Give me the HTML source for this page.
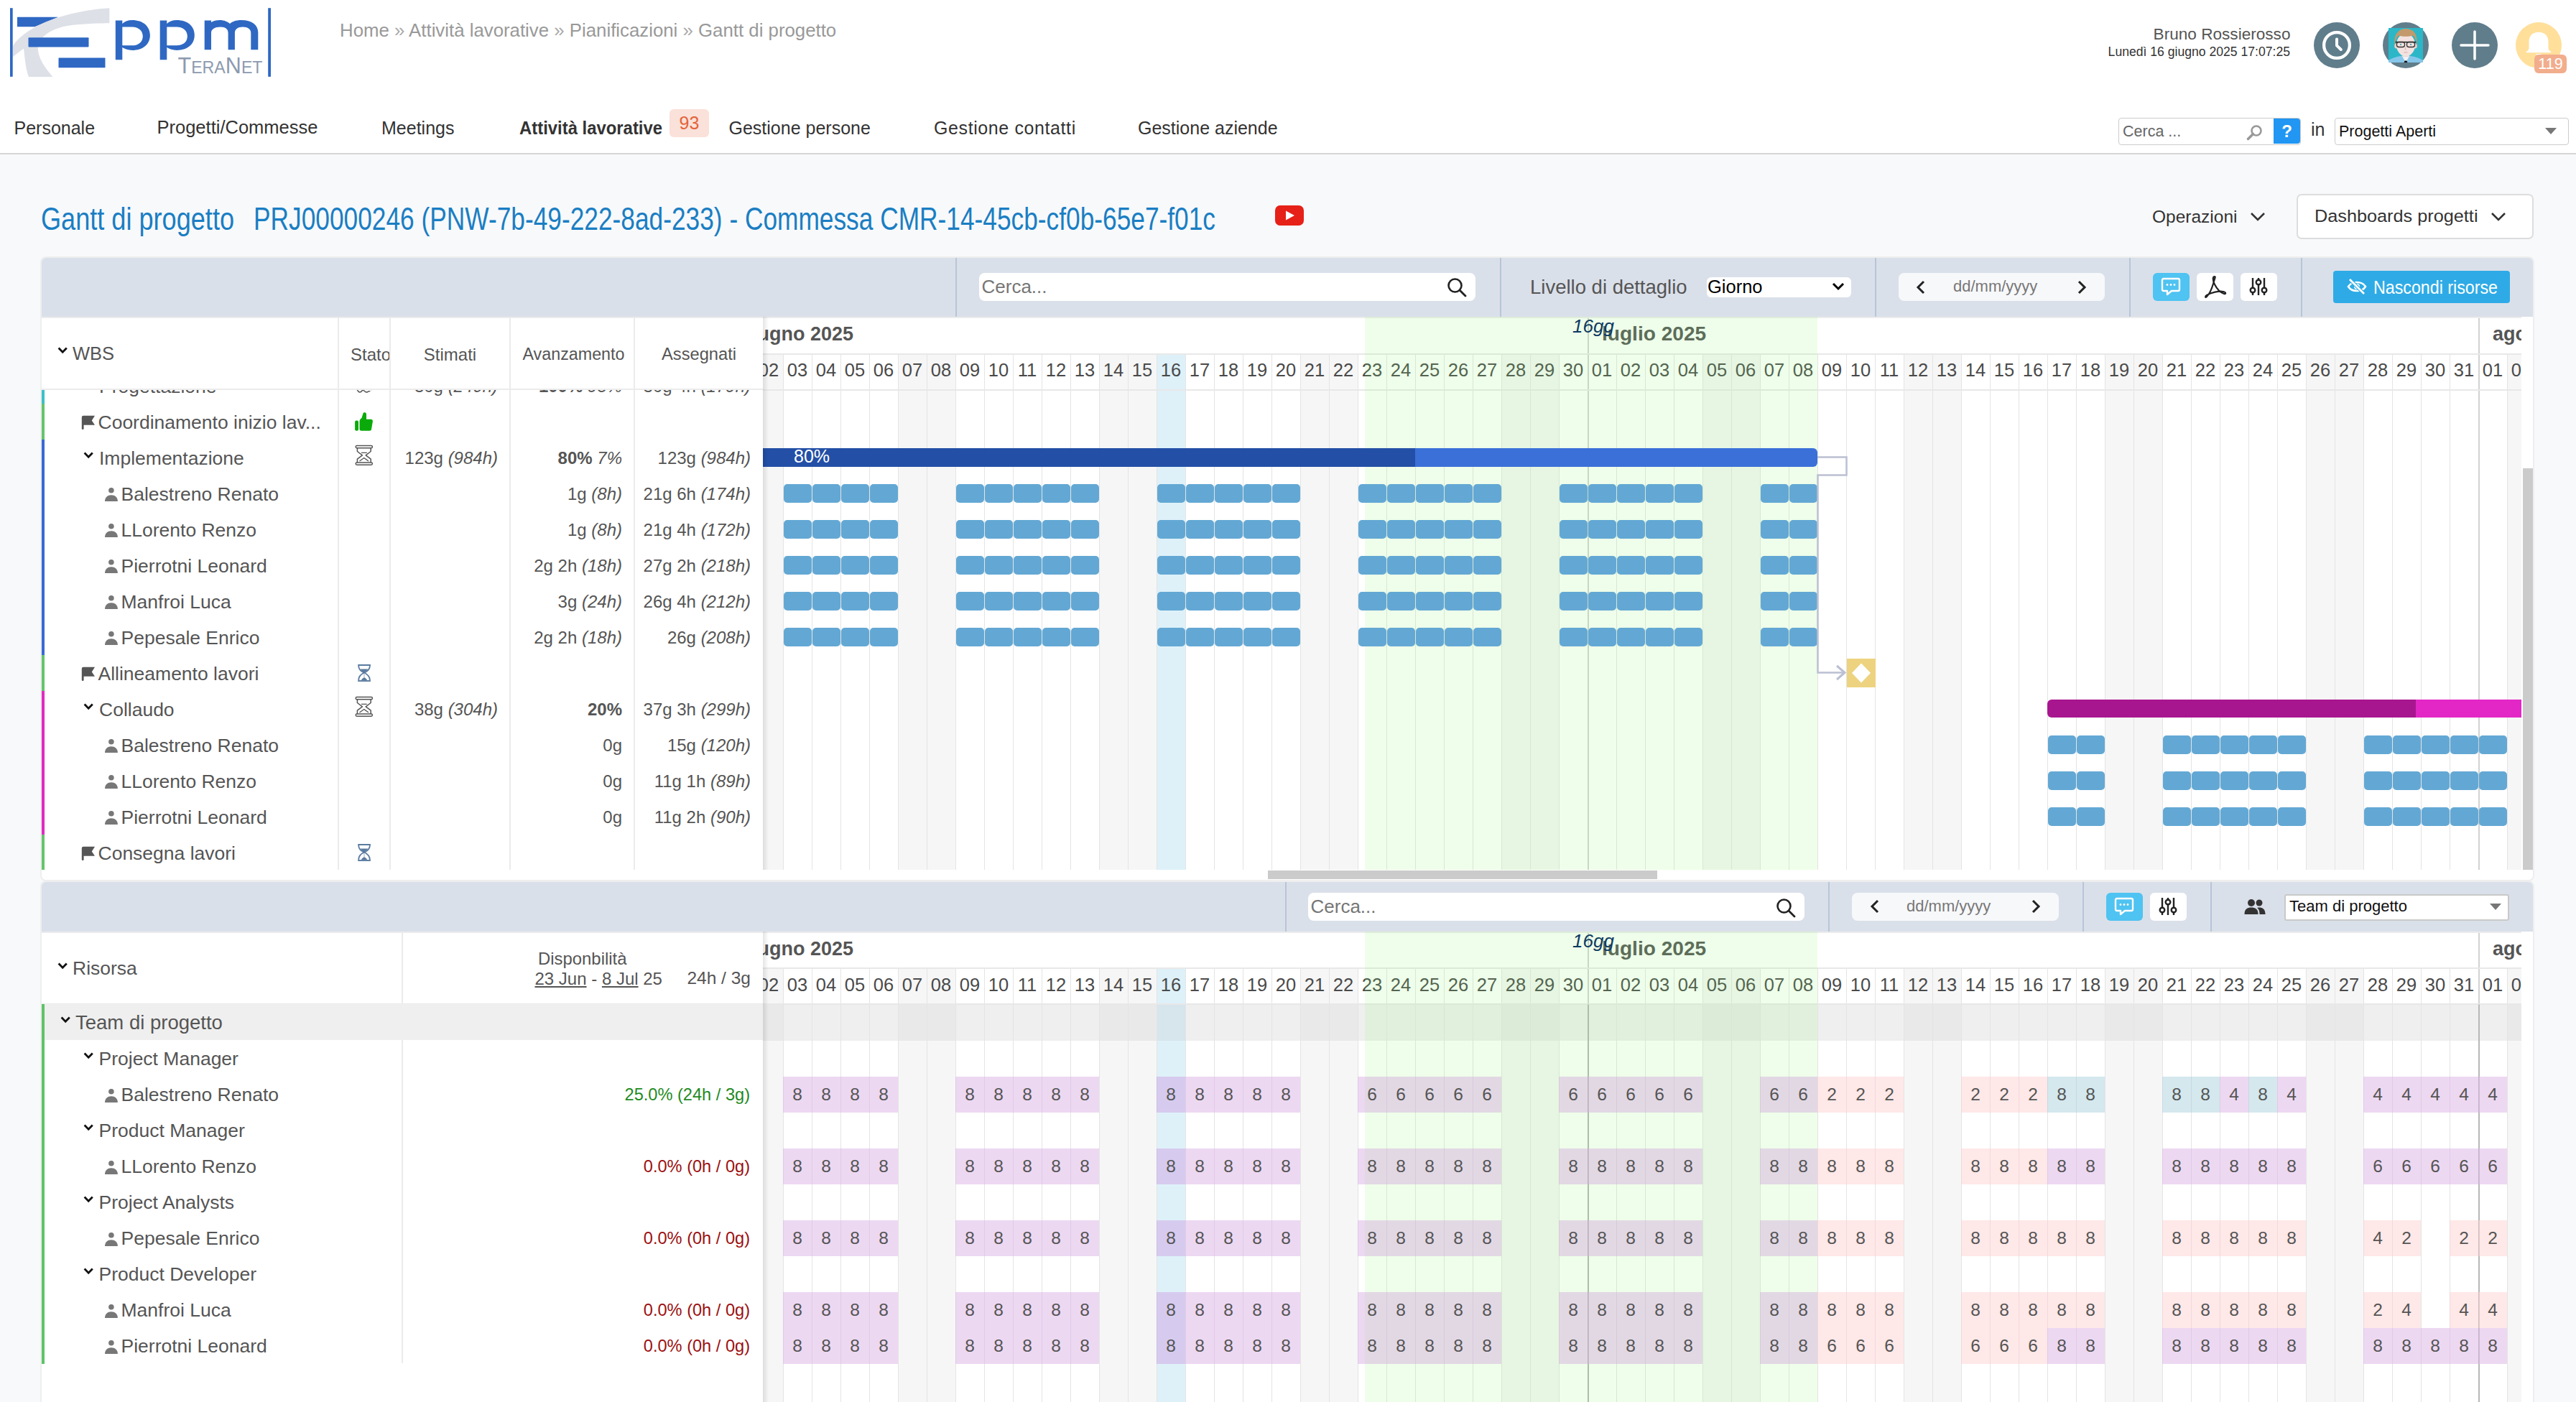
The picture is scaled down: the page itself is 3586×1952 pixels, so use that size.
<!DOCTYPE html><html><head><meta charset="utf-8"><style>
*{box-sizing:border-box;margin:0;padding:0}
html,body{width:3586px;height:1952px;overflow:hidden;background:#F8F9FB;font-family:"Liberation Sans",sans-serif;color:#555}
.a{position:absolute}
.t{position:absolute;white-space:nowrap;line-height:1}
svg{display:block}
</style></head><body><div class="a" style="left:0px;top:0px;width:3586px;height:213px;background:#fff"></div>
<div class="a" style="left:0px;top:213px;width:3586px;height:2px;background:#D6D6D6"></div>
<svg class="a" style="left:0px;top:0px" width="400" height="120" viewBox="0 0 400 120">
<path d="M24,23.7 L81,23.7 L48.4,37.2 L24,37.2 Z" fill="#2F68C3"/>
<path d="M152.4,11.2 C120,13 75,22 45,40 C30,49 22,57 18,64 L18,79 L33,67.5 C35,85 36,97 40,107 L73.4,107 C63,95 52.5,80 52.8,67 C53,50 75,38 100,35 C120,33 140,32.3 152.4,32.3 Z" fill="#DDE0E7"/>
<rect x="14" y="11.2" width="3.7" height="95.6" fill="#2F68C3"/>
<rect x="373.2" y="11.2" width="3.8" height="95.6" fill="#2F68C3"/>
<rect x="39.5" y="52.2" width="84" height="13.3" rx="1" fill="#2F68C3"/>
<rect x="81.5" y="80.5" width="65" height="13.7" rx="0.5" fill="#2F68C3"/>
<path fill-rule="evenodd" fill="#2F68C3" d="M160.8,83.2 L160.8,28.6 L170.3,28.6 L170.3,33 C174,29.5 178,27.9 184,27.9 C199,27.9 208.9,36.5 208.9,48.9 C208.9,61.5 199,69.9 184,69.9 C178,69.9 174,68 170.3,66 L170.3,83.2 Z M170.3,37.5 L184,37.5 C193,37.5 198.8,43 198.8,50.4 C198.8,58 193,63.3 184,63.3 L170.3,63.3 Z"/>
<path fill-rule="evenodd" fill="#2F68C3" d="M222.7,83.2 L222.7,28.6 L232.3,28.6 L232.3,33 C236,29.5 240,27.9 246,27.9 C261,27.9 270.8,36.5 270.8,48.9 C270.8,61.5 261,69.9 246,69.9 C240,69.9 236,68 232.3,66 L232.3,83.2 Z M232.3,37.5 L246,37.5 C255,37.5 260.8,43 260.8,50.4 C260.8,58 255,63.3 246,63.3 L232.3,63.3 Z"/>
<path fill="#2F68C3" d="M284.7,69.2 L284.7,28.6 L294,28.6 L294,31 C297,29 301,27.9 306,27.9 C312,27.9 317,30 320,33 C323,30 328,27.9 336,27.9 C351,27.9 359.3,35 359.3,45 L359.3,69.2 L349.3,69.2 L349.3,46 C349.3,40.5 345,37.5 338,37.5 C331,37.5 326.9,40.5 326.9,46 L326.9,69.2 L317.6,69.2 L317.6,46 C317.6,40.5 314,37.5 307,37.5 C299,37.5 294,40.5 294,46 L294,69.2 Z"/>
<text x="247.5" y="101.6" font-family="Liberation Sans" font-size="31" fill="#8D9AAF" textLength="118" lengthAdjust="spacingAndGlyphs">T<tspan font-size="23.5">ERA</tspan>N<tspan font-size="23.5">ET</tspan></text>
</svg>
<div class="t" style="left:473px;top:29.56px;font-size:25.8px;color:#999;font-weight:400;">Home <span style="color:#aaa">»</span> Attività lavorative <span style="color:#aaa">»</span> Pianificazioni <span style="color:#aaa">»</span> Gantt di progetto</div>
<div class="t" style="right:397.5px;top:36.87px;font-size:22.6px;color:#555;font-weight:400;">Bruno Rossierosso</div>
<div class="t" style="right:398px;top:64.1px;font-size:17.6px;color:#333;font-weight:400;">Lunedì 16 giugno 2025 17:07:25</div>
<div class="a" style="left:3221px;top:31px;width:64px;height:64px;border-radius:50%;background:#607D8B"><svg width="64" height="64" viewBox="0 0 64 64"><circle cx="32" cy="32" r="17.9" fill="none" stroke="#fff" stroke-width="4.3"/><path d="M32,23.4 V32.4 L37.8,38" fill="none" stroke="#fff" stroke-width="4" stroke-linecap="round" stroke-linejoin="round"/></svg></div>
<div class="a" style="left:3317px;top:31px;width:64px;height:64px;border-radius:50%;background:#607D8B"><svg width="64" height="64" viewBox="0 0 64 64">
<rect x="8" y="8" width="48" height="48" fill="#2BB7C7"/>
<path d="M8,56 L8,53 C13,49.5 20,47.5 25,47 L39,47 C44,47.5 51,49.5 56,53 L56,56 Z" fill="#86C6EA"/>
<path d="M26.5,46.5 L32,56 L37.5,46.5 Z" fill="#F2F2F2"/>
<path d="M30.6,53.5 L33.4,53.5 L34.4,56 L29.6,56 Z" fill="#111"/>
<rect x="28" y="41" width="8" height="7" fill="#EBCFCB"/>
<ellipse cx="18.8" cy="33" rx="2.6" ry="3.6" fill="#EBCFCB"/>
<ellipse cx="45.2" cy="33" rx="2.6" ry="3.6" fill="#EBCFCB"/>
<ellipse cx="32" cy="31.5" rx="13" ry="16" fill="#F3E2E0"/>
<path d="M16.8,33 C14.5,18 21,9 32,9 C44,9 49.5,18 47.2,33 C46.5,26 45.5,21 42,18.5 C36,20.5 27,20 21.5,18.5 C18.5,22 17.3,27 16.8,33 Z" fill="#C39A6B"/>
<path d="M17.5,27.6 H46.5" stroke="#222" stroke-width="1.5"/>
<rect x="19.5" y="27.5" width="11" height="7" rx="2.8" fill="none" stroke="#333" stroke-width="1.3"/>
<rect x="33.5" y="27.5" width="11" height="7" rx="2.8" fill="none" stroke="#333" stroke-width="1.3"/>
<circle cx="25" cy="31" r="1.1" fill="#2A9BA8"/><circle cx="39" cy="31" r="1.1" fill="#2A9BA8"/>
<path d="M32,34 L31,38 L33,38" fill="none" stroke="#C9A9A5" stroke-width="0.7"/>
<path d="M29.5,42 H34.5" stroke="#D9A3A0" stroke-width="0.9"/>
</svg></div>
<div class="a" style="left:3413px;top:31px;width:64px;height:64px;border-radius:50%;background:#607D8B"><svg width="64" height="64" viewBox="0 0 64 64"><path d="M32 13 L32 51 M13 32 L51 32" stroke="#fff" stroke-width="3.5" stroke-linecap="round"/></svg></div>
<div class="a" style="left:3502px;top:31px;width:64px;height:64px;border-radius:50%;background:#FFDF9A"><svg width="64" height="64" viewBox="0 0 64 64"><path d="M18.5,38 L18.5,27 C18.5,19 23.5,13.8 32,13.8 C40.5,13.8 45.5,19 45.5,27 L45.5,36.5 C45.5,38.5 47.5,39.8 49,40.6 C50,41.5 49.5,42.3 48,42.3 L16,42.3 C14.5,42.3 14,41.5 15,40.6 C16.5,39.8 18.5,38.5 18.5,36.5 Z" fill="#fff"/><path d="M28,44 L36,44 L32,48 Z" fill="#fff"/></svg></div>
<div class="a" style="left:3528px;top:76px;width:45px;height:26px;background:#F2AD8D;border-radius:6px"><div class="t" style="left:3px;top:2.5px;font-size:21.5px;color:#fff;font-weight:400;width:39px;text-align:center">119</div></div>
<div class="t" style="left:19.5px;top:165.84px;font-size:25px;color:#333;font-weight:400;">Personale</div>
<div class="t" style="left:218.5px;top:165.41px;font-size:25.5px;color:#333;font-weight:400;">Progetti/Commesse</div>
<div class="t" style="left:531px;top:165.84px;font-size:25px;color:#333;font-weight:400;">Meetings</div>
<div class="t" style="left:723px;top:165.84px;font-size:25px;color:#333;font-weight:700;transform:scaleX(0.955);transform-origin:0 0">Attività lavorative</div>
<div class="a" style="left:932px;top:152px;width:55px;height:39px;background:#FAE1D9;border-radius:6px"><div class="t" style="left:0px;top:7px;font-size:25px;color:#E3643A;font-weight:400;width:55px;text-align:center">93</div></div>
<div class="t" style="left:1014.5px;top:165.84px;font-size:25px;color:#333;font-weight:400;">Gestione persone</div>
<div class="t" style="left:1300px;top:165.84px;font-size:25px;color:#333;font-weight:400;letter-spacing:0.6px">Gestione contatti</div>
<div class="t" style="left:1584px;top:165.84px;font-size:25px;color:#333;font-weight:400;">Gestione aziende</div>
<div class="a" style="left:2949px;top:164px;width:254px;height:38px;background:#fff;border:1.5px solid #ccc;border-radius:4px"></div>
<div class="t" style="left:2955px;top:172.8px;font-size:21.5px;color:#666;font-weight:400;">Cerca ...</div>
<svg class="a" style="left:3126px;top:172px" width="26" height="26" viewBox="0 0 26 26"><circle cx="15" cy="10" r="6.5" fill="none" stroke="#999" stroke-width="2.6"/><path d="M10.5 14.5 L3.5 21.5" stroke="#999" stroke-width="3.5" stroke-linecap="round"/></svg>
<div class="a" style="left:3165px;top:165px;width:37px;height:35px;background:#2196F3;border-radius:0 4px 4px 0"><div class="t" style="left:0px;top:6px;font-size:24px;color:#fff;font-weight:700;width:37px;text-align:center">?</div></div>
<div class="t" style="left:3217px;top:167.84px;font-size:25px;color:#333;font-weight:400;">in</div>
<div class="a" style="left:3250px;top:164px;width:326px;height:38px;background:#fff;border:1.5px solid #ccc;border-radius:4px"></div>
<div class="t" style="left:3256px;top:172.8px;font-size:21.5px;color:#111;font-weight:400;">Progetti Aperti</div>
<svg class="a" style="left:3543px;top:178px" width="16" height="10" viewBox="0 0 16 10"><path d="M0 0 L16 0 L8 9 Z" fill="#777"/></svg>
<div class="t" style="left:57px;top:282.41px;font-size:45px;color:#1A7EC3;font-weight:400;transform:scaleX(0.8025);transform-origin:0 0;">Gantt di progetto</div>
<div class="t" style="left:353px;top:282.41px;font-size:45px;color:#1A7EC3;font-weight:400;transform:scaleX(0.7842);transform-origin:0 0;">PRJ00000246 (PNW-7b-49-222-8ad-233) - Commessa CMR-14-45cb-cf0b-65e7-f01c</div>
<svg class="a" style="left:1774px;top:285px" width="42" height="30" viewBox="0 0 42 30"><rect x="1" y="1" width="40" height="28" rx="7" fill="#E62117"/><path d="M16 8.5 L28 15 L16 21.5 Z" fill="#fff"/></svg>
<div class="t" style="left:2995.5px;top:290.26px;font-size:24.5px;color:#333;font-weight:400;transform:scaleX(1.0001);transform-origin:0 0;">Operazioni</div>
<svg class="a" style="left:3132px;top:295px" width="22" height="14" viewBox="0 0 22 14"><path d="M2 2 L11 11 L20 2" fill="none" stroke="#333" stroke-width="2.6"/></svg>
<div class="a" style="left:3197px;top:270px;width:330px;height:63px;background:#fff;border:2px solid #DDDDDD;border-radius:7px"></div>
<div class="t" style="left:3222px;top:289.26px;font-size:24.5px;color:#333;font-weight:400;transform:scaleX(1.0311);transform-origin:0 0;">Dashboards progetti</div>
<svg class="a" style="left:3467px;top:295px" width="22" height="14" viewBox="0 0 22 14"><path d="M2 2 L11 11 L20 2" fill="none" stroke="#333" stroke-width="2.6"/></svg>
<div class="a" style="left:56px;top:357px;width:3472px;height:870px;background:#fff;border:2px solid #EEEEEE;border-radius:8px"></div>
<div class="a" style="left:58px;top:359px;width:3468px;height:82px;background:#DAE0EA;border-radius:6px 6px 0 0"></div>
<div class="a" style="left:56px;top:1226px;width:3472px;height:760px;background:#fff;border:2px solid #EEEEEE;border-radius:8px"></div>
<div class="a" style="left:58px;top:1228px;width:3468px;height:69px;background:#DAE0EA;border-radius:6px 6px 0 0"></div>
<div class="a" style="left:1330px;top:359px;width:2px;height:82px;background:#B7C5D8"></div>
<div class="a" style="left:2088px;top:359px;width:2px;height:82px;background:#B7C5D8"></div>
<div class="a" style="left:2610px;top:359px;width:2px;height:82px;background:#B7C5D8"></div>
<div class="a" style="left:2964px;top:359px;width:2px;height:82px;background:#B7C5D8"></div>
<div class="a" style="left:3203px;top:359px;width:2px;height:82px;background:#B7C5D8"></div>
<div class="a" style="left:1363px;top:380px;width:691px;height:39px;background:#fff;border-radius:8px"></div>
<div class="t" style="left:1366.5px;top:385.99px;font-size:26px;color:#767676;font-weight:400;">Cerca...</div>
<svg class="a" style="left:2013px;top:385px" width="30" height="30" viewBox="0 0 30 30"><circle cx="12.5" cy="12.5" r="9" fill="none" stroke="#222" stroke-width="2.6"/><path d="M19 19 L27 27" stroke="#222" stroke-width="2.8" stroke-linecap="round"/></svg>
<div class="t" style="left:2130px;top:385.72px;font-size:27.5px;color:#555;font-weight:400;">Livello di dettaglio</div>
<div class="a" style="left:2376px;top:386px;width:201px;height:28px;background:#fff;border-radius:6px"></div>
<div class="t" style="left:2377px;top:387.41px;font-size:25.5px;color:#000;font-weight:400;">Giorno</div>
<svg class="a" style="left:2550px;top:393px" width="18" height="13" viewBox="0 0 18 13"><path d="M2 2 L9 9 L16 2" fill="none" stroke="#000" stroke-width="3"/></svg>
<div class="a" style="left:2643px;top:380px;width:287px;height:39px;background:#F7F8FA;border-radius:8px"></div>
<svg class="a" style="left:2667px;top:390px" width="14" height="20" viewBox="0 0 14 20"><path d="M11 2 L3 10 L11 18" fill="none" stroke="#222" stroke-width="3"/></svg>
<div class="t" style="left:2719px;top:388.38px;font-size:22px;color:#777;font-weight:400;">dd/mm/yyyy</div>
<svg class="a" style="left:2891px;top:390px" width="14" height="20" viewBox="0 0 14 20"><path d="M3 2 L11 10 L3 18" fill="none" stroke="#222" stroke-width="3"/></svg>
<div class="a" style="left:2997px;top:380px;width:51px;height:39px;background:#4FC3F1;border-radius:6px"><svg class="a" style="left:10px;top:4px" width="30" height="30" viewBox="0 0 30 30"><path d="M5 4 L25 4 Q27 4 27 6 L27 19 Q27 21 25 21 L16 21 L10 26 L10 21 L5 21 Q3 21 3 19 L3 6 Q3 4 5 4 Z" fill="none" stroke="#fff" stroke-width="2.4" stroke-linejoin="round"/><circle cx="10" cy="12.5" r="1.4" fill="#fff"/><circle cx="15" cy="12.5" r="1.4" fill="#fff"/><circle cx="20" cy="12.5" r="1.4" fill="#fff"/></svg></div>
<div class="a" style="left:3058px;top:380px;width:51px;height:39px;background:#fff;border-radius:6px"><svg class="a" style="left:8px;top:2px" width="34" height="34" viewBox="0 0 34 34"><path d="M17 3 C14 3 14 8 17 14 C20 20 24 25 30 27 C33 28 33 25 29 24 C23 23 12 25 6 29 C3 31 4 33 6 31 C10 27 13 20 15 13 C16 8 19 3 17 3 Z" fill="none" stroke="#222" stroke-width="2.2" stroke-linejoin="round"/></svg></div>
<div class="a" style="left:3119px;top:380px;width:51px;height:39px;background:#fff;border-radius:6px"><svg class="a" style="left:10px;top:4px" width="30" height="30" viewBox="0 0 30 30"><path d="M7 3 L7 27 M15 3 L15 27 M23 3 L23 27" stroke="#222" stroke-width="2.4"/><circle cx="7" cy="20" r="3.3" fill="#fff" stroke="#222" stroke-width="2.4"/><circle cx="15" cy="9" r="3.3" fill="#fff" stroke="#222" stroke-width="2.4"/><circle cx="23" cy="20" r="3.3" fill="#fff" stroke="#222" stroke-width="2.4"/></svg></div>
<div class="a" style="left:3248px;top:377px;width:246px;height:45px;background:#2EABE6;border-radius:4px"><svg class="a" style="left:18px;top:9px" width="30" height="26" viewBox="0 0 30 26"><path d="M3 13 C8 5 22 5 27 13 C22 21 8 21 3 13 Z" fill="none" stroke="#fff" stroke-width="2.6"/><circle cx="15" cy="13" r="4" fill="#fff"/><path d="M5 3 L25 23" stroke="#2EABE6" stroke-width="5"/><path d="M5 3 L25 23" stroke="#fff" stroke-width="2.6"/></svg></div>
<div class="t" style="left:3304px;top:387.84px;font-size:25px;color:#fff;font-weight:400;transform:scaleX(0.9292);transform-origin:0 0;">Nascondi risorse</div>
<div class="a" style="left:58px;top:441px;width:1004px;height:100px;background:#fff"></div>
<div class="a" style="left:58px;top:541px;width:1004px;height:2px;background:#EBEBEB"></div>
<div class="a" style="left:58px;top:441px;width:1004px;height:2px;background:#ECECEC"></div>
<div class="a" style="left:470px;top:441px;width:2px;height:770px;background:#EBEBEB"></div>
<div class="a" style="left:542px;top:441px;width:2px;height:770px;background:#EBEBEB"></div>
<div class="a" style="left:709px;top:441px;width:2px;height:770px;background:#EBEBEB"></div>
<div class="a" style="left:882px;top:441px;width:2px;height:770px;background:#EBEBEB"></div>
<svg class="a" style="left:78.5px;top:483px" width="16" height="12" viewBox="0 0 16 12"><path d="M2.6,1.6 L8.2,7.2 L13.8,1.6" fill="none" stroke="#111" stroke-width="2.8"/></svg>
<div class="t" style="left:101px;top:480.41px;font-size:25.5px;color:#555;font-weight:400;">WBS</div>
<div class="a" style="left:472px;top:441px;width:70px;height:100px;overflow:hidden"><div class="t" style="left:16px;top:40.68399999999997px;font-size:24px;color:#555;font-weight:400;">Stato</div></div>
<div class="t" style="left:326.5px;width:600px;text-align:center;top:481.68px;font-size:24px;color:#555;font-weight:400;">Stimati</div>
<div class="t" style="left:498.5px;width:600px;text-align:center;top:482.28px;font-size:23.3px;color:#555;font-weight:400;">Avanzamento</div>
<div class="t" style="left:673px;width:600px;text-align:center;top:481.94px;font-size:23.7px;color:#555;font-weight:400;">Assegnati</div>
<div class="a" style="left:58px;top:543px;width:1004px;height:668px;overflow:hidden">
<div class="a" style="left:0px;top:-32px;width:4px;height:51px;background:#3CC0C8"></div>
<div class="a" style="left:0px;top:19px;width:4px;height:50px;background:#66C46E"></div>
<div class="a" style="left:0px;top:69px;width:4px;height:300px;background:#3A69D6"></div>
<div class="a" style="left:0px;top:369px;width:4px;height:50px;background:#66C46E"></div>
<div class="a" style="left:0px;top:419px;width:4px;height:200px;background:#E02CC1"></div>
<div class="a" style="left:0px;top:619px;width:4px;height:49px;background:#66C46E"></div>
<svg class="a" style="left:57px;top:-14.5px" width="16" height="12" viewBox="0 0 16 12"><path d="M2.6,1.6 L8.2,7.2 L13.8,1.6" fill="none" stroke="#111" stroke-width="2.8"/></svg>
<div class="t" style="left:80px;top:-18.23px;font-size:26.5px;color:#555;font-weight:400">Progettazione</div>
<svg class="a" style="left:436px;top:-5px" width="28" height="14" viewBox="0 0 28 14"><path d="M3,4 C5,9 8,9 10,6 C12,3 14,9 17,8 C19,7 20,6 21,7" fill="none" stroke="#555" stroke-width="1.5"/><path d="M21,7 L26,3" fill="none" stroke="#aaa" stroke-width="1" stroke-dasharray="1.5,1.5"/></svg>
<div class="t" style="right:369px;top:-17.12px;font-size:24px;color:#555">30g <i>(240h)</i></div>
<div class="t" style="right:196px;top:-17.12px;font-size:24px;color:#555"><b>100%</b> <i>93%</i></div>
<div class="t" style="right:17px;top:-17.12px;font-size:24px;color:#555">30g 4h <i>(179h)</i></div>
<svg class="a" style="left:55px;top:34.5px" width="20" height="21" viewBox="0 0 20 21"><path d="M0.8,3 Q0.8,0.8 3,0.8 L19,0.8 L14.8,7.5 L19,13.7 L3.6,13.7 L3.6,19 Q3.6,20 2.2,20 Q0.8,20 0.8,19 Z" fill="#555"/></svg>
<div class="t" style="left:78.5px;top:31.77px;font-size:26.5px;color:#555;font-weight:400">Coordinamento inizio lav...</div>
<svg class="a" style="left:436px;top:31px" width="26" height="27" viewBox="0 0 26 27"><rect x="0.1" y="11.4" width="4.9" height="14.3" rx="2" fill="#0AAA0A"/><path d="M6.5,13 C6.5,10.5 8,9 9.5,8 L11.5,1.5 C12,0.3 13,0.2 14,0.3 C15.5,0.6 16,1.5 16,3 L16,9.8 L22.5,9.8 C24,9.8 25,11 24.9,12.5 L23,24 C22.8,25.2 21.8,25.7 20.5,25.7 L9,25.7 C7.5,25.7 6.5,24.7 6.5,23.5 Z" fill="#0AAA0A"/></svg>
<svg class="a" style="left:57px;top:85.5px" width="16" height="12" viewBox="0 0 16 12"><path d="M2.6,1.6 L8.2,7.2 L13.8,1.6" fill="none" stroke="#111" stroke-width="2.8"/></svg>
<div class="t" style="left:80px;top:81.77px;font-size:26.5px;color:#555;font-weight:400">Implementazione</div>
<svg class="a" style="left:436px;top:76px" width="26" height="30" viewBox="0 0 26 30"><rect x="1.2" y="1.6" width="23.2" height="3.2" rx="1.6" fill="none" stroke="#555" stroke-width="1.5"/><rect x="1.2" y="25" width="23.2" height="3.2" rx="1.6" fill="none" stroke="#555" stroke-width="1.5"/><path d="M3.4,4.8 V9.5 L10.4,14.8 L3.4,20.2 V25 M22.2,4.8 V9.5 L15.2,14.8 L22.2,20.2 V25" fill="none" stroke="#555" stroke-width="1.5" stroke-linejoin="round"/><path d="M9,11.4 H16.8 M6.5,23 L12.8,18.5 L19,23" fill="none" stroke="#555" stroke-width="1.4"/></svg>
<div class="t" style="right:369px;top:82.88px;font-size:24px;color:#555">123g <i>(984h)</i></div>
<div class="t" style="right:196px;top:82.88px;font-size:24px;color:#555"><b>80%</b> <i>7%</i></div>
<div class="t" style="right:17px;top:82.88px;font-size:24px;color:#555">123g <i>(984h)</i></div>
<svg class="a" style="left:87px;top:134.5px" width="20" height="21" viewBox="0 0 20 21"><circle cx="9.9" cy="4.75" r="3.8" fill="#777"/><path d="M1,19.9 C1,14.5 5,11.25 9.95,11.25 C14.9,11.25 18.9,14.5 18.9,19.9 Z" fill="#777"/></svg>
<div class="t" style="left:110.5px;top:131.77px;font-size:26.5px;color:#555;font-weight:400">Balestreno Renato</div>
<div class="t" style="right:196px;top:132.88px;font-size:24px;color:#555">1g <i>(8h)</i></div>
<div class="t" style="right:17px;top:132.88px;font-size:24px;color:#555">21g 6h <i>(174h)</i></div>
<svg class="a" style="left:87px;top:184.5px" width="20" height="21" viewBox="0 0 20 21"><circle cx="9.9" cy="4.75" r="3.8" fill="#777"/><path d="M1,19.9 C1,14.5 5,11.25 9.95,11.25 C14.9,11.25 18.9,14.5 18.9,19.9 Z" fill="#777"/></svg>
<div class="t" style="left:110.5px;top:181.77px;font-size:26.5px;color:#555;font-weight:400">LLorento Renzo</div>
<div class="t" style="right:196px;top:182.88px;font-size:24px;color:#555">1g <i>(8h)</i></div>
<div class="t" style="right:17px;top:182.88px;font-size:24px;color:#555">21g 4h <i>(172h)</i></div>
<svg class="a" style="left:87px;top:234.5px" width="20" height="21" viewBox="0 0 20 21"><circle cx="9.9" cy="4.75" r="3.8" fill="#777"/><path d="M1,19.9 C1,14.5 5,11.25 9.95,11.25 C14.9,11.25 18.9,14.5 18.9,19.9 Z" fill="#777"/></svg>
<div class="t" style="left:110.5px;top:231.77px;font-size:26.5px;color:#555;font-weight:400">Pierrotni Leonard</div>
<div class="t" style="right:196px;top:232.88px;font-size:24px;color:#555">2g 2h <i>(18h)</i></div>
<div class="t" style="right:17px;top:232.88px;font-size:24px;color:#555">27g 2h <i>(218h)</i></div>
<svg class="a" style="left:87px;top:284.5px" width="20" height="21" viewBox="0 0 20 21"><circle cx="9.9" cy="4.75" r="3.8" fill="#777"/><path d="M1,19.9 C1,14.5 5,11.25 9.95,11.25 C14.9,11.25 18.9,14.5 18.9,19.9 Z" fill="#777"/></svg>
<div class="t" style="left:110.5px;top:281.77px;font-size:26.5px;color:#555;font-weight:400">Manfroi Luca</div>
<div class="t" style="right:196px;top:282.88px;font-size:24px;color:#555">3g <i>(24h)</i></div>
<div class="t" style="right:17px;top:282.88px;font-size:24px;color:#555">26g 4h <i>(212h)</i></div>
<svg class="a" style="left:87px;top:334.5px" width="20" height="21" viewBox="0 0 20 21"><circle cx="9.9" cy="4.75" r="3.8" fill="#777"/><path d="M1,19.9 C1,14.5 5,11.25 9.95,11.25 C14.9,11.25 18.9,14.5 18.9,19.9 Z" fill="#777"/></svg>
<div class="t" style="left:110.5px;top:331.77px;font-size:26.5px;color:#555;font-weight:400">Pepesale Enrico</div>
<div class="t" style="right:196px;top:332.88px;font-size:24px;color:#555">2g 2h <i>(18h)</i></div>
<div class="t" style="right:17px;top:332.88px;font-size:24px;color:#555">26g <i>(208h)</i></div>
<svg class="a" style="left:55px;top:384.5px" width="20" height="21" viewBox="0 0 20 21"><path d="M0.8,3 Q0.8,0.8 3,0.8 L19,0.8 L14.8,7.5 L19,13.7 L3.6,13.7 L3.6,19 Q3.6,20 2.2,20 Q0.8,20 0.8,19 Z" fill="#555"/></svg>
<div class="t" style="left:78.5px;top:381.77px;font-size:26.5px;color:#555;font-weight:400">Allineamento lavori</div>
<svg class="a" style="left:439px;top:381px" width="20" height="26" viewBox="0 0 20 26"><rect x="1.2" y="1" width="17.7" height="2" fill="#5A7BA0"/><rect x="1.2" y="23.1" width="17.7" height="1.9" fill="#5A7BA0"/><path d="M2.2,3 C2.2,8 5,10.5 9.7,12.8 C5,15 2.2,18 2.2,23 M17.9,3 C17.9,8 15,10.5 10.3,12.8 C15,15 17.9,18 17.9,23" fill="none" stroke="#5A7BA0" stroke-width="1.8"/><path d="M4.5,7.4 L15.6,7.4 C14,9.8 12,11 10,12.8 C8,11 6,9.8 4.5,7.4 Z" fill="#5A7BA0"/><path d="M5.9,23.1 C7,20.8 8.5,19.6 10,19.6 C11.5,19.6 13,20.8 14.1,23.1 Z" fill="#5A7BA0"/><path d="M10,12.8 V19.6" stroke="#5A7BA0" stroke-width="0.6"/></svg>
<svg class="a" style="left:57px;top:435.5px" width="16" height="12" viewBox="0 0 16 12"><path d="M2.6,1.6 L8.2,7.2 L13.8,1.6" fill="none" stroke="#111" stroke-width="2.8"/></svg>
<div class="t" style="left:80px;top:431.77px;font-size:26.5px;color:#555;font-weight:400">Collaudo</div>
<svg class="a" style="left:436px;top:426px" width="26" height="30" viewBox="0 0 26 30"><rect x="1.2" y="1.6" width="23.2" height="3.2" rx="1.6" fill="none" stroke="#555" stroke-width="1.5"/><rect x="1.2" y="25" width="23.2" height="3.2" rx="1.6" fill="none" stroke="#555" stroke-width="1.5"/><path d="M3.4,4.8 V9.5 L10.4,14.8 L3.4,20.2 V25 M22.2,4.8 V9.5 L15.2,14.8 L22.2,20.2 V25" fill="none" stroke="#555" stroke-width="1.5" stroke-linejoin="round"/><path d="M9,11.4 H16.8 M6.5,23 L12.8,18.5 L19,23" fill="none" stroke="#555" stroke-width="1.4"/></svg>
<div class="t" style="right:369px;top:432.88px;font-size:24px;color:#555">38g <i>(304h)</i></div>
<div class="t" style="right:196px;top:432.88px;font-size:24px;color:#555"><b>20%</b></div>
<div class="t" style="right:17px;top:432.88px;font-size:24px;color:#555">37g 3h <i>(299h)</i></div>
<svg class="a" style="left:87px;top:484.5px" width="20" height="21" viewBox="0 0 20 21"><circle cx="9.9" cy="4.75" r="3.8" fill="#777"/><path d="M1,19.9 C1,14.5 5,11.25 9.95,11.25 C14.9,11.25 18.9,14.5 18.9,19.9 Z" fill="#777"/></svg>
<div class="t" style="left:110.5px;top:481.77px;font-size:26.5px;color:#555;font-weight:400">Balestreno Renato</div>
<div class="t" style="right:196px;top:482.88px;font-size:24px;color:#555">0g</div>
<div class="t" style="right:17px;top:482.88px;font-size:24px;color:#555">15g <i>(120h)</i></div>
<svg class="a" style="left:87px;top:534.5px" width="20" height="21" viewBox="0 0 20 21"><circle cx="9.9" cy="4.75" r="3.8" fill="#777"/><path d="M1,19.9 C1,14.5 5,11.25 9.95,11.25 C14.9,11.25 18.9,14.5 18.9,19.9 Z" fill="#777"/></svg>
<div class="t" style="left:110.5px;top:531.77px;font-size:26.5px;color:#555;font-weight:400">LLorento Renzo</div>
<div class="t" style="right:196px;top:532.88px;font-size:24px;color:#555">0g</div>
<div class="t" style="right:17px;top:532.88px;font-size:24px;color:#555">11g 1h <i>(89h)</i></div>
<svg class="a" style="left:87px;top:584.5px" width="20" height="21" viewBox="0 0 20 21"><circle cx="9.9" cy="4.75" r="3.8" fill="#777"/><path d="M1,19.9 C1,14.5 5,11.25 9.95,11.25 C14.9,11.25 18.9,14.5 18.9,19.9 Z" fill="#777"/></svg>
<div class="t" style="left:110.5px;top:581.77px;font-size:26.5px;color:#555;font-weight:400">Pierrotni Leonard</div>
<div class="t" style="right:196px;top:582.88px;font-size:24px;color:#555">0g</div>
<div class="t" style="right:17px;top:582.88px;font-size:24px;color:#555">11g 2h <i>(90h)</i></div>
<svg class="a" style="left:55px;top:634.5px" width="20" height="21" viewBox="0 0 20 21"><path d="M0.8,3 Q0.8,0.8 3,0.8 L19,0.8 L14.8,7.5 L19,13.7 L3.6,13.7 L3.6,19 Q3.6,20 2.2,20 Q0.8,20 0.8,19 Z" fill="#555"/></svg>
<div class="t" style="left:78.5px;top:631.77px;font-size:26.5px;color:#555;font-weight:400">Consegna lavori</div>
<svg class="a" style="left:439px;top:631px" width="20" height="26" viewBox="0 0 20 26"><rect x="1.2" y="1" width="17.7" height="2" fill="#5A7BA0"/><rect x="1.2" y="23.1" width="17.7" height="1.9" fill="#5A7BA0"/><path d="M2.2,3 C2.2,8 5,10.5 9.7,12.8 C5,15 2.2,18 2.2,23 M17.9,3 C17.9,8 15,10.5 10.3,12.8 C15,15 17.9,18 17.9,23" fill="none" stroke="#5A7BA0" stroke-width="1.8"/><path d="M4.5,7.4 L15.6,7.4 C14,9.8 12,11 10,12.8 C8,11 6,9.8 4.5,7.4 Z" fill="#5A7BA0"/><path d="M5.9,23.1 C7,20.8 8.5,19.6 10,19.6 C11.5,19.6 13,20.8 14.1,23.1 Z" fill="#5A7BA0"/><path d="M10,12.8 V19.6" stroke="#5A7BA0" stroke-width="0.6"/></svg>
</div>
<div class="a" style="left:1062px;top:441px;width:2448px;height:770px;overflow:hidden;background:#fff">
<div class="a" style="left:-12px;top:52px;width:40px;height:718px;background:#F6F6F6"></div>
<div class="a" style="left:188px;top:52px;width:40px;height:718px;background:#F6F6F6"></div>
<div class="a" style="left:228px;top:52px;width:40px;height:718px;background:#F6F6F6"></div>
<div class="a" style="left:468px;top:52px;width:40px;height:718px;background:#F6F6F6"></div>
<div class="a" style="left:508px;top:52px;width:40px;height:718px;background:#F6F6F6"></div>
<div class="a" style="left:548px;top:52px;width:40px;height:718px;background:#DEF1F9"></div>
<div class="a" style="left:748px;top:52px;width:40px;height:718px;background:#F6F6F6"></div>
<div class="a" style="left:788px;top:52px;width:40px;height:718px;background:#F6F6F6"></div>
<div class="a" style="left:1028px;top:52px;width:40px;height:718px;background:#F6F6F6"></div>
<div class="a" style="left:1068px;top:52px;width:40px;height:718px;background:#F6F6F6"></div>
<div class="a" style="left:1308px;top:52px;width:40px;height:718px;background:#F6F6F6"></div>
<div class="a" style="left:1348px;top:52px;width:40px;height:718px;background:#F6F6F6"></div>
<div class="a" style="left:1588px;top:52px;width:40px;height:718px;background:#F6F6F6"></div>
<div class="a" style="left:1628px;top:52px;width:40px;height:718px;background:#F6F6F6"></div>
<div class="a" style="left:1868px;top:52px;width:40px;height:718px;background:#F6F6F6"></div>
<div class="a" style="left:1908px;top:52px;width:40px;height:718px;background:#F6F6F6"></div>
<div class="a" style="left:2148px;top:52px;width:40px;height:718px;background:#F6F6F6"></div>
<div class="a" style="left:2188px;top:52px;width:40px;height:718px;background:#F6F6F6"></div>
<div class="a" style="left:2428px;top:52px;width:40px;height:718px;background:#F6F6F6"></div>
<div class="a" style="left:-12px;top:52px;width:1px;height:718px;background:#E4E4E4"></div>
<div class="a" style="left:28px;top:52px;width:1px;height:718px;background:#E4E4E4"></div>
<div class="a" style="left:68px;top:52px;width:1px;height:718px;background:#E4E4E4"></div>
<div class="a" style="left:108px;top:52px;width:1px;height:718px;background:#E4E4E4"></div>
<div class="a" style="left:148px;top:52px;width:1px;height:718px;background:#E4E4E4"></div>
<div class="a" style="left:188px;top:52px;width:1px;height:718px;background:#E4E4E4"></div>
<div class="a" style="left:228px;top:52px;width:1px;height:718px;background:#E4E4E4"></div>
<div class="a" style="left:268px;top:52px;width:1px;height:718px;background:#E4E4E4"></div>
<div class="a" style="left:308px;top:52px;width:1px;height:718px;background:#E4E4E4"></div>
<div class="a" style="left:348px;top:52px;width:1px;height:718px;background:#E4E4E4"></div>
<div class="a" style="left:388px;top:52px;width:1px;height:718px;background:#E4E4E4"></div>
<div class="a" style="left:428px;top:52px;width:1px;height:718px;background:#E4E4E4"></div>
<div class="a" style="left:468px;top:52px;width:1px;height:718px;background:#E4E4E4"></div>
<div class="a" style="left:508px;top:52px;width:1px;height:718px;background:#E4E4E4"></div>
<div class="a" style="left:548px;top:52px;width:1px;height:718px;background:#E4E4E4"></div>
<div class="a" style="left:588px;top:52px;width:1px;height:718px;background:#E4E4E4"></div>
<div class="a" style="left:628px;top:52px;width:1px;height:718px;background:#E4E4E4"></div>
<div class="a" style="left:668px;top:52px;width:1px;height:718px;background:#E4E4E4"></div>
<div class="a" style="left:708px;top:52px;width:1px;height:718px;background:#E4E4E4"></div>
<div class="a" style="left:748px;top:52px;width:1px;height:718px;background:#E4E4E4"></div>
<div class="a" style="left:788px;top:52px;width:1px;height:718px;background:#E4E4E4"></div>
<div class="a" style="left:828px;top:52px;width:1px;height:718px;background:#E4E4E4"></div>
<div class="a" style="left:868px;top:52px;width:1px;height:718px;background:#E4E4E4"></div>
<div class="a" style="left:908px;top:52px;width:1px;height:718px;background:#E4E4E4"></div>
<div class="a" style="left:948px;top:52px;width:1px;height:718px;background:#E4E4E4"></div>
<div class="a" style="left:988px;top:52px;width:1px;height:718px;background:#E4E4E4"></div>
<div class="a" style="left:1028px;top:52px;width:1px;height:718px;background:#E4E4E4"></div>
<div class="a" style="left:1068px;top:52px;width:1px;height:718px;background:#E4E4E4"></div>
<div class="a" style="left:1108px;top:52px;width:1px;height:718px;background:#E4E4E4"></div>
<div class="a" style="left:1148px;top:52px;width:1px;height:718px;background:#E4E4E4"></div>
<div class="a" style="left:1188px;top:52px;width:1px;height:718px;background:#E4E4E4"></div>
<div class="a" style="left:1228px;top:52px;width:1px;height:718px;background:#E4E4E4"></div>
<div class="a" style="left:1268px;top:52px;width:1px;height:718px;background:#E4E4E4"></div>
<div class="a" style="left:1308px;top:52px;width:1px;height:718px;background:#E4E4E4"></div>
<div class="a" style="left:1348px;top:52px;width:1px;height:718px;background:#E4E4E4"></div>
<div class="a" style="left:1388px;top:52px;width:1px;height:718px;background:#E4E4E4"></div>
<div class="a" style="left:1428px;top:52px;width:1px;height:718px;background:#E4E4E4"></div>
<div class="a" style="left:1468px;top:52px;width:1px;height:718px;background:#E4E4E4"></div>
<div class="a" style="left:1508px;top:52px;width:1px;height:718px;background:#E4E4E4"></div>
<div class="a" style="left:1548px;top:52px;width:1px;height:718px;background:#E4E4E4"></div>
<div class="a" style="left:1588px;top:52px;width:1px;height:718px;background:#E4E4E4"></div>
<div class="a" style="left:1628px;top:52px;width:1px;height:718px;background:#E4E4E4"></div>
<div class="a" style="left:1668px;top:52px;width:1px;height:718px;background:#E4E4E4"></div>
<div class="a" style="left:1708px;top:52px;width:1px;height:718px;background:#E4E4E4"></div>
<div class="a" style="left:1748px;top:52px;width:1px;height:718px;background:#E4E4E4"></div>
<div class="a" style="left:1788px;top:52px;width:1px;height:718px;background:#E4E4E4"></div>
<div class="a" style="left:1828px;top:52px;width:1px;height:718px;background:#E4E4E4"></div>
<div class="a" style="left:1868px;top:52px;width:1px;height:718px;background:#E4E4E4"></div>
<div class="a" style="left:1908px;top:52px;width:1px;height:718px;background:#E4E4E4"></div>
<div class="a" style="left:1948px;top:52px;width:1px;height:718px;background:#E4E4E4"></div>
<div class="a" style="left:1988px;top:52px;width:1px;height:718px;background:#E4E4E4"></div>
<div class="a" style="left:2028px;top:52px;width:1px;height:718px;background:#E4E4E4"></div>
<div class="a" style="left:2068px;top:52px;width:1px;height:718px;background:#E4E4E4"></div>
<div class="a" style="left:2108px;top:52px;width:1px;height:718px;background:#E4E4E4"></div>
<div class="a" style="left:2148px;top:52px;width:1px;height:718px;background:#E4E4E4"></div>
<div class="a" style="left:2188px;top:52px;width:1px;height:718px;background:#E4E4E4"></div>
<div class="a" style="left:2228px;top:52px;width:1px;height:718px;background:#E4E4E4"></div>
<div class="a" style="left:2268px;top:52px;width:1px;height:718px;background:#E4E4E4"></div>
<div class="a" style="left:2308px;top:52px;width:1px;height:718px;background:#E4E4E4"></div>
<div class="a" style="left:2348px;top:52px;width:1px;height:718px;background:#E4E4E4"></div>
<div class="a" style="left:2388px;top:52px;width:1px;height:718px;background:#E4E4E4"></div>
<div class="a" style="left:2428px;top:52px;width:1px;height:718px;background:#E4E4E4"></div>
<div class="a" style="left:1148px;top:2px;width:2px;height:768px;background:#D2D2D2"></div>
<div class="a" style="left:2388px;top:2px;width:2px;height:768px;background:#D2D2D2"></div>
<div class="a" style="left:0px;top:0px;width:2448px;height:2px;background:#ECECEC"></div>
<div class="a" style="left:0px;top:51px;width:2448px;height:2px;background:#E8E8E8"></div>
<div class="a" style="left:0px;top:101px;width:2448px;height:2px;background:#E8E8E8"></div>
<div class="t" style="left:-36.0px;top:11.14px;font-size:27px;font-weight:700;color:#555">Giugno 2025</div>
<div class="t" style="left:1168px;top:11.14px;font-size:27px;font-weight:700;color:#555;transform:scaleX(1.04);transform-origin:0 0">luglio 2025</div>
<div class="t" style="left:2408px;top:11.14px;font-size:27px;font-weight:700;color:#555">agosto 2025</div>
<div class="t" style="left:-12px;width:40px;text-align:center;top:62.41px;font-size:25.5px;color:#4a4a4a">02</div>
<div class="t" style="left:28px;width:40px;text-align:center;top:62.41px;font-size:25.5px;color:#4a4a4a">03</div>
<div class="t" style="left:68px;width:40px;text-align:center;top:62.41px;font-size:25.5px;color:#4a4a4a">04</div>
<div class="t" style="left:108px;width:40px;text-align:center;top:62.41px;font-size:25.5px;color:#4a4a4a">05</div>
<div class="t" style="left:148px;width:40px;text-align:center;top:62.41px;font-size:25.5px;color:#4a4a4a">06</div>
<div class="t" style="left:188px;width:40px;text-align:center;top:62.41px;font-size:25.5px;color:#4a4a4a">07</div>
<div class="t" style="left:228px;width:40px;text-align:center;top:62.41px;font-size:25.5px;color:#4a4a4a">08</div>
<div class="t" style="left:268px;width:40px;text-align:center;top:62.41px;font-size:25.5px;color:#4a4a4a">09</div>
<div class="t" style="left:308px;width:40px;text-align:center;top:62.41px;font-size:25.5px;color:#4a4a4a">10</div>
<div class="t" style="left:348px;width:40px;text-align:center;top:62.41px;font-size:25.5px;color:#4a4a4a">11</div>
<div class="t" style="left:388px;width:40px;text-align:center;top:62.41px;font-size:25.5px;color:#4a4a4a">12</div>
<div class="t" style="left:428px;width:40px;text-align:center;top:62.41px;font-size:25.5px;color:#4a4a4a">13</div>
<div class="t" style="left:468px;width:40px;text-align:center;top:62.41px;font-size:25.5px;color:#4a4a4a">14</div>
<div class="t" style="left:508px;width:40px;text-align:center;top:62.41px;font-size:25.5px;color:#4a4a4a">15</div>
<div class="t" style="left:548px;width:40px;text-align:center;top:62.41px;font-size:25.5px;color:#4a4a4a">16</div>
<div class="t" style="left:588px;width:40px;text-align:center;top:62.41px;font-size:25.5px;color:#4a4a4a">17</div>
<div class="t" style="left:628px;width:40px;text-align:center;top:62.41px;font-size:25.5px;color:#4a4a4a">18</div>
<div class="t" style="left:668px;width:40px;text-align:center;top:62.41px;font-size:25.5px;color:#4a4a4a">19</div>
<div class="t" style="left:708px;width:40px;text-align:center;top:62.41px;font-size:25.5px;color:#4a4a4a">20</div>
<div class="t" style="left:748px;width:40px;text-align:center;top:62.41px;font-size:25.5px;color:#4a4a4a">21</div>
<div class="t" style="left:788px;width:40px;text-align:center;top:62.41px;font-size:25.5px;color:#4a4a4a">22</div>
<div class="t" style="left:828px;width:40px;text-align:center;top:62.41px;font-size:25.5px;color:#4a4a4a">23</div>
<div class="t" style="left:868px;width:40px;text-align:center;top:62.41px;font-size:25.5px;color:#4a4a4a">24</div>
<div class="t" style="left:908px;width:40px;text-align:center;top:62.41px;font-size:25.5px;color:#4a4a4a">25</div>
<div class="t" style="left:948px;width:40px;text-align:center;top:62.41px;font-size:25.5px;color:#4a4a4a">26</div>
<div class="t" style="left:988px;width:40px;text-align:center;top:62.41px;font-size:25.5px;color:#4a4a4a">27</div>
<div class="t" style="left:1028px;width:40px;text-align:center;top:62.41px;font-size:25.5px;color:#4a4a4a">28</div>
<div class="t" style="left:1068px;width:40px;text-align:center;top:62.41px;font-size:25.5px;color:#4a4a4a">29</div>
<div class="t" style="left:1108px;width:40px;text-align:center;top:62.41px;font-size:25.5px;color:#4a4a4a">30</div>
<div class="t" style="left:1148px;width:40px;text-align:center;top:62.41px;font-size:25.5px;color:#4a4a4a">01</div>
<div class="t" style="left:1188px;width:40px;text-align:center;top:62.41px;font-size:25.5px;color:#4a4a4a">02</div>
<div class="t" style="left:1228px;width:40px;text-align:center;top:62.41px;font-size:25.5px;color:#4a4a4a">03</div>
<div class="t" style="left:1268px;width:40px;text-align:center;top:62.41px;font-size:25.5px;color:#4a4a4a">04</div>
<div class="t" style="left:1308px;width:40px;text-align:center;top:62.41px;font-size:25.5px;color:#4a4a4a">05</div>
<div class="t" style="left:1348px;width:40px;text-align:center;top:62.41px;font-size:25.5px;color:#4a4a4a">06</div>
<div class="t" style="left:1388px;width:40px;text-align:center;top:62.41px;font-size:25.5px;color:#4a4a4a">07</div>
<div class="t" style="left:1428px;width:40px;text-align:center;top:62.41px;font-size:25.5px;color:#4a4a4a">08</div>
<div class="t" style="left:1468px;width:40px;text-align:center;top:62.41px;font-size:25.5px;color:#4a4a4a">09</div>
<div class="t" style="left:1508px;width:40px;text-align:center;top:62.41px;font-size:25.5px;color:#4a4a4a">10</div>
<div class="t" style="left:1548px;width:40px;text-align:center;top:62.41px;font-size:25.5px;color:#4a4a4a">11</div>
<div class="t" style="left:1588px;width:40px;text-align:center;top:62.41px;font-size:25.5px;color:#4a4a4a">12</div>
<div class="t" style="left:1628px;width:40px;text-align:center;top:62.41px;font-size:25.5px;color:#4a4a4a">13</div>
<div class="t" style="left:1668px;width:40px;text-align:center;top:62.41px;font-size:25.5px;color:#4a4a4a">14</div>
<div class="t" style="left:1708px;width:40px;text-align:center;top:62.41px;font-size:25.5px;color:#4a4a4a">15</div>
<div class="t" style="left:1748px;width:40px;text-align:center;top:62.41px;font-size:25.5px;color:#4a4a4a">16</div>
<div class="t" style="left:1788px;width:40px;text-align:center;top:62.41px;font-size:25.5px;color:#4a4a4a">17</div>
<div class="t" style="left:1828px;width:40px;text-align:center;top:62.41px;font-size:25.5px;color:#4a4a4a">18</div>
<div class="t" style="left:1868px;width:40px;text-align:center;top:62.41px;font-size:25.5px;color:#4a4a4a">19</div>
<div class="t" style="left:1908px;width:40px;text-align:center;top:62.41px;font-size:25.5px;color:#4a4a4a">20</div>
<div class="t" style="left:1948px;width:40px;text-align:center;top:62.41px;font-size:25.5px;color:#4a4a4a">21</div>
<div class="t" style="left:1988px;width:40px;text-align:center;top:62.41px;font-size:25.5px;color:#4a4a4a">22</div>
<div class="t" style="left:2028px;width:40px;text-align:center;top:62.41px;font-size:25.5px;color:#4a4a4a">23</div>
<div class="t" style="left:2068px;width:40px;text-align:center;top:62.41px;font-size:25.5px;color:#4a4a4a">24</div>
<div class="t" style="left:2108px;width:40px;text-align:center;top:62.41px;font-size:25.5px;color:#4a4a4a">25</div>
<div class="t" style="left:2148px;width:40px;text-align:center;top:62.41px;font-size:25.5px;color:#4a4a4a">26</div>
<div class="t" style="left:2188px;width:40px;text-align:center;top:62.41px;font-size:25.5px;color:#4a4a4a">27</div>
<div class="t" style="left:2228px;width:40px;text-align:center;top:62.41px;font-size:25.5px;color:#4a4a4a">28</div>
<div class="t" style="left:2268px;width:40px;text-align:center;top:62.41px;font-size:25.5px;color:#4a4a4a">29</div>
<div class="t" style="left:2308px;width:40px;text-align:center;top:62.41px;font-size:25.5px;color:#4a4a4a">30</div>
<div class="t" style="left:2348px;width:40px;text-align:center;top:62.41px;font-size:25.5px;color:#4a4a4a">31</div>
<div class="t" style="left:2388px;width:40px;text-align:center;top:62.41px;font-size:25.5px;color:#4a4a4a">01</div>
<div class="t" style="left:2428px;width:40px;text-align:center;top:62.41px;font-size:25.5px;color:#4a4a4a">02</div>
<div class="a" style="left:838px;top:0px;width:630px;height:770px;background:rgba(140,245,115,0.15)"></div>
<div class="t" style="left:1127px;top:-0.51px;font-size:26px;font-style:italic;color:#0E3A62">16gg</div>
<div class="a" style="left:0px;top:183px;width:908px;height:25.5px;background:#234FA6"></div>
<div class="a" style="left:908px;top:183px;width:560px;height:25.5px;background:#3A70D8;border-radius:0 6px 6px 0"></div>
<div class="t" style="left:43px;top:181.54px;font-size:25px;color:#fff">80%</div>
<div class="a" style="left:28.5px;top:233px;width:39px;height:26px;background:#63A8D4;border-radius:5px"></div>
<div class="a" style="left:68.5px;top:233px;width:39px;height:26px;background:#63A8D4;border-radius:5px"></div>
<div class="a" style="left:108.5px;top:233px;width:39px;height:26px;background:#63A8D4;border-radius:5px"></div>
<div class="a" style="left:148.5px;top:233px;width:39px;height:26px;background:#63A8D4;border-radius:5px"></div>
<div class="a" style="left:268.5px;top:233px;width:39px;height:26px;background:#63A8D4;border-radius:5px"></div>
<div class="a" style="left:308.5px;top:233px;width:39px;height:26px;background:#63A8D4;border-radius:5px"></div>
<div class="a" style="left:348.5px;top:233px;width:39px;height:26px;background:#63A8D4;border-radius:5px"></div>
<div class="a" style="left:388.5px;top:233px;width:39px;height:26px;background:#63A8D4;border-radius:5px"></div>
<div class="a" style="left:428.5px;top:233px;width:39px;height:26px;background:#63A8D4;border-radius:5px"></div>
<div class="a" style="left:548.5px;top:233px;width:39px;height:26px;background:#63A8D4;border-radius:5px"></div>
<div class="a" style="left:588.5px;top:233px;width:39px;height:26px;background:#63A8D4;border-radius:5px"></div>
<div class="a" style="left:628.5px;top:233px;width:39px;height:26px;background:#63A8D4;border-radius:5px"></div>
<div class="a" style="left:668.5px;top:233px;width:39px;height:26px;background:#63A8D4;border-radius:5px"></div>
<div class="a" style="left:708.5px;top:233px;width:39px;height:26px;background:#63A8D4;border-radius:5px"></div>
<div class="a" style="left:828.5px;top:233px;width:39px;height:26px;background:#63A8D4;border-radius:5px"></div>
<div class="a" style="left:868.5px;top:233px;width:39px;height:26px;background:#63A8D4;border-radius:5px"></div>
<div class="a" style="left:908.5px;top:233px;width:39px;height:26px;background:#63A8D4;border-radius:5px"></div>
<div class="a" style="left:948.5px;top:233px;width:39px;height:26px;background:#63A8D4;border-radius:5px"></div>
<div class="a" style="left:988.5px;top:233px;width:39px;height:26px;background:#63A8D4;border-radius:5px"></div>
<div class="a" style="left:1108.5px;top:233px;width:39px;height:26px;background:#63A8D4;border-radius:5px"></div>
<div class="a" style="left:1148.5px;top:233px;width:39px;height:26px;background:#63A8D4;border-radius:5px"></div>
<div class="a" style="left:1188.5px;top:233px;width:39px;height:26px;background:#63A8D4;border-radius:5px"></div>
<div class="a" style="left:1228.5px;top:233px;width:39px;height:26px;background:#63A8D4;border-radius:5px"></div>
<div class="a" style="left:1268.5px;top:233px;width:39px;height:26px;background:#63A8D4;border-radius:5px"></div>
<div class="a" style="left:1388.5px;top:233px;width:39px;height:26px;background:#63A8D4;border-radius:5px"></div>
<div class="a" style="left:1428.5px;top:233px;width:39px;height:26px;background:#63A8D4;border-radius:5px"></div>
<div class="a" style="left:28.5px;top:283px;width:39px;height:26px;background:#63A8D4;border-radius:5px"></div>
<div class="a" style="left:68.5px;top:283px;width:39px;height:26px;background:#63A8D4;border-radius:5px"></div>
<div class="a" style="left:108.5px;top:283px;width:39px;height:26px;background:#63A8D4;border-radius:5px"></div>
<div class="a" style="left:148.5px;top:283px;width:39px;height:26px;background:#63A8D4;border-radius:5px"></div>
<div class="a" style="left:268.5px;top:283px;width:39px;height:26px;background:#63A8D4;border-radius:5px"></div>
<div class="a" style="left:308.5px;top:283px;width:39px;height:26px;background:#63A8D4;border-radius:5px"></div>
<div class="a" style="left:348.5px;top:283px;width:39px;height:26px;background:#63A8D4;border-radius:5px"></div>
<div class="a" style="left:388.5px;top:283px;width:39px;height:26px;background:#63A8D4;border-radius:5px"></div>
<div class="a" style="left:428.5px;top:283px;width:39px;height:26px;background:#63A8D4;border-radius:5px"></div>
<div class="a" style="left:548.5px;top:283px;width:39px;height:26px;background:#63A8D4;border-radius:5px"></div>
<div class="a" style="left:588.5px;top:283px;width:39px;height:26px;background:#63A8D4;border-radius:5px"></div>
<div class="a" style="left:628.5px;top:283px;width:39px;height:26px;background:#63A8D4;border-radius:5px"></div>
<div class="a" style="left:668.5px;top:283px;width:39px;height:26px;background:#63A8D4;border-radius:5px"></div>
<div class="a" style="left:708.5px;top:283px;width:39px;height:26px;background:#63A8D4;border-radius:5px"></div>
<div class="a" style="left:828.5px;top:283px;width:39px;height:26px;background:#63A8D4;border-radius:5px"></div>
<div class="a" style="left:868.5px;top:283px;width:39px;height:26px;background:#63A8D4;border-radius:5px"></div>
<div class="a" style="left:908.5px;top:283px;width:39px;height:26px;background:#63A8D4;border-radius:5px"></div>
<div class="a" style="left:948.5px;top:283px;width:39px;height:26px;background:#63A8D4;border-radius:5px"></div>
<div class="a" style="left:988.5px;top:283px;width:39px;height:26px;background:#63A8D4;border-radius:5px"></div>
<div class="a" style="left:1108.5px;top:283px;width:39px;height:26px;background:#63A8D4;border-radius:5px"></div>
<div class="a" style="left:1148.5px;top:283px;width:39px;height:26px;background:#63A8D4;border-radius:5px"></div>
<div class="a" style="left:1188.5px;top:283px;width:39px;height:26px;background:#63A8D4;border-radius:5px"></div>
<div class="a" style="left:1228.5px;top:283px;width:39px;height:26px;background:#63A8D4;border-radius:5px"></div>
<div class="a" style="left:1268.5px;top:283px;width:39px;height:26px;background:#63A8D4;border-radius:5px"></div>
<div class="a" style="left:1388.5px;top:283px;width:39px;height:26px;background:#63A8D4;border-radius:5px"></div>
<div class="a" style="left:1428.5px;top:283px;width:39px;height:26px;background:#63A8D4;border-radius:5px"></div>
<div class="a" style="left:28.5px;top:333px;width:39px;height:26px;background:#63A8D4;border-radius:5px"></div>
<div class="a" style="left:68.5px;top:333px;width:39px;height:26px;background:#63A8D4;border-radius:5px"></div>
<div class="a" style="left:108.5px;top:333px;width:39px;height:26px;background:#63A8D4;border-radius:5px"></div>
<div class="a" style="left:148.5px;top:333px;width:39px;height:26px;background:#63A8D4;border-radius:5px"></div>
<div class="a" style="left:268.5px;top:333px;width:39px;height:26px;background:#63A8D4;border-radius:5px"></div>
<div class="a" style="left:308.5px;top:333px;width:39px;height:26px;background:#63A8D4;border-radius:5px"></div>
<div class="a" style="left:348.5px;top:333px;width:39px;height:26px;background:#63A8D4;border-radius:5px"></div>
<div class="a" style="left:388.5px;top:333px;width:39px;height:26px;background:#63A8D4;border-radius:5px"></div>
<div class="a" style="left:428.5px;top:333px;width:39px;height:26px;background:#63A8D4;border-radius:5px"></div>
<div class="a" style="left:548.5px;top:333px;width:39px;height:26px;background:#63A8D4;border-radius:5px"></div>
<div class="a" style="left:588.5px;top:333px;width:39px;height:26px;background:#63A8D4;border-radius:5px"></div>
<div class="a" style="left:628.5px;top:333px;width:39px;height:26px;background:#63A8D4;border-radius:5px"></div>
<div class="a" style="left:668.5px;top:333px;width:39px;height:26px;background:#63A8D4;border-radius:5px"></div>
<div class="a" style="left:708.5px;top:333px;width:39px;height:26px;background:#63A8D4;border-radius:5px"></div>
<div class="a" style="left:828.5px;top:333px;width:39px;height:26px;background:#63A8D4;border-radius:5px"></div>
<div class="a" style="left:868.5px;top:333px;width:39px;height:26px;background:#63A8D4;border-radius:5px"></div>
<div class="a" style="left:908.5px;top:333px;width:39px;height:26px;background:#63A8D4;border-radius:5px"></div>
<div class="a" style="left:948.5px;top:333px;width:39px;height:26px;background:#63A8D4;border-radius:5px"></div>
<div class="a" style="left:988.5px;top:333px;width:39px;height:26px;background:#63A8D4;border-radius:5px"></div>
<div class="a" style="left:1108.5px;top:333px;width:39px;height:26px;background:#63A8D4;border-radius:5px"></div>
<div class="a" style="left:1148.5px;top:333px;width:39px;height:26px;background:#63A8D4;border-radius:5px"></div>
<div class="a" style="left:1188.5px;top:333px;width:39px;height:26px;background:#63A8D4;border-radius:5px"></div>
<div class="a" style="left:1228.5px;top:333px;width:39px;height:26px;background:#63A8D4;border-radius:5px"></div>
<div class="a" style="left:1268.5px;top:333px;width:39px;height:26px;background:#63A8D4;border-radius:5px"></div>
<div class="a" style="left:1388.5px;top:333px;width:39px;height:26px;background:#63A8D4;border-radius:5px"></div>
<div class="a" style="left:1428.5px;top:333px;width:39px;height:26px;background:#63A8D4;border-radius:5px"></div>
<div class="a" style="left:28.5px;top:383px;width:39px;height:26px;background:#63A8D4;border-radius:5px"></div>
<div class="a" style="left:68.5px;top:383px;width:39px;height:26px;background:#63A8D4;border-radius:5px"></div>
<div class="a" style="left:108.5px;top:383px;width:39px;height:26px;background:#63A8D4;border-radius:5px"></div>
<div class="a" style="left:148.5px;top:383px;width:39px;height:26px;background:#63A8D4;border-radius:5px"></div>
<div class="a" style="left:268.5px;top:383px;width:39px;height:26px;background:#63A8D4;border-radius:5px"></div>
<div class="a" style="left:308.5px;top:383px;width:39px;height:26px;background:#63A8D4;border-radius:5px"></div>
<div class="a" style="left:348.5px;top:383px;width:39px;height:26px;background:#63A8D4;border-radius:5px"></div>
<div class="a" style="left:388.5px;top:383px;width:39px;height:26px;background:#63A8D4;border-radius:5px"></div>
<div class="a" style="left:428.5px;top:383px;width:39px;height:26px;background:#63A8D4;border-radius:5px"></div>
<div class="a" style="left:548.5px;top:383px;width:39px;height:26px;background:#63A8D4;border-radius:5px"></div>
<div class="a" style="left:588.5px;top:383px;width:39px;height:26px;background:#63A8D4;border-radius:5px"></div>
<div class="a" style="left:628.5px;top:383px;width:39px;height:26px;background:#63A8D4;border-radius:5px"></div>
<div class="a" style="left:668.5px;top:383px;width:39px;height:26px;background:#63A8D4;border-radius:5px"></div>
<div class="a" style="left:708.5px;top:383px;width:39px;height:26px;background:#63A8D4;border-radius:5px"></div>
<div class="a" style="left:828.5px;top:383px;width:39px;height:26px;background:#63A8D4;border-radius:5px"></div>
<div class="a" style="left:868.5px;top:383px;width:39px;height:26px;background:#63A8D4;border-radius:5px"></div>
<div class="a" style="left:908.5px;top:383px;width:39px;height:26px;background:#63A8D4;border-radius:5px"></div>
<div class="a" style="left:948.5px;top:383px;width:39px;height:26px;background:#63A8D4;border-radius:5px"></div>
<div class="a" style="left:988.5px;top:383px;width:39px;height:26px;background:#63A8D4;border-radius:5px"></div>
<div class="a" style="left:1108.5px;top:383px;width:39px;height:26px;background:#63A8D4;border-radius:5px"></div>
<div class="a" style="left:1148.5px;top:383px;width:39px;height:26px;background:#63A8D4;border-radius:5px"></div>
<div class="a" style="left:1188.5px;top:383px;width:39px;height:26px;background:#63A8D4;border-radius:5px"></div>
<div class="a" style="left:1228.5px;top:383px;width:39px;height:26px;background:#63A8D4;border-radius:5px"></div>
<div class="a" style="left:1268.5px;top:383px;width:39px;height:26px;background:#63A8D4;border-radius:5px"></div>
<div class="a" style="left:1388.5px;top:383px;width:39px;height:26px;background:#63A8D4;border-radius:5px"></div>
<div class="a" style="left:1428.5px;top:383px;width:39px;height:26px;background:#63A8D4;border-radius:5px"></div>
<div class="a" style="left:28.5px;top:433px;width:39px;height:26px;background:#63A8D4;border-radius:5px"></div>
<div class="a" style="left:68.5px;top:433px;width:39px;height:26px;background:#63A8D4;border-radius:5px"></div>
<div class="a" style="left:108.5px;top:433px;width:39px;height:26px;background:#63A8D4;border-radius:5px"></div>
<div class="a" style="left:148.5px;top:433px;width:39px;height:26px;background:#63A8D4;border-radius:5px"></div>
<div class="a" style="left:268.5px;top:433px;width:39px;height:26px;background:#63A8D4;border-radius:5px"></div>
<div class="a" style="left:308.5px;top:433px;width:39px;height:26px;background:#63A8D4;border-radius:5px"></div>
<div class="a" style="left:348.5px;top:433px;width:39px;height:26px;background:#63A8D4;border-radius:5px"></div>
<div class="a" style="left:388.5px;top:433px;width:39px;height:26px;background:#63A8D4;border-radius:5px"></div>
<div class="a" style="left:428.5px;top:433px;width:39px;height:26px;background:#63A8D4;border-radius:5px"></div>
<div class="a" style="left:548.5px;top:433px;width:39px;height:26px;background:#63A8D4;border-radius:5px"></div>
<div class="a" style="left:588.5px;top:433px;width:39px;height:26px;background:#63A8D4;border-radius:5px"></div>
<div class="a" style="left:628.5px;top:433px;width:39px;height:26px;background:#63A8D4;border-radius:5px"></div>
<div class="a" style="left:668.5px;top:433px;width:39px;height:26px;background:#63A8D4;border-radius:5px"></div>
<div class="a" style="left:708.5px;top:433px;width:39px;height:26px;background:#63A8D4;border-radius:5px"></div>
<div class="a" style="left:828.5px;top:433px;width:39px;height:26px;background:#63A8D4;border-radius:5px"></div>
<div class="a" style="left:868.5px;top:433px;width:39px;height:26px;background:#63A8D4;border-radius:5px"></div>
<div class="a" style="left:908.5px;top:433px;width:39px;height:26px;background:#63A8D4;border-radius:5px"></div>
<div class="a" style="left:948.5px;top:433px;width:39px;height:26px;background:#63A8D4;border-radius:5px"></div>
<div class="a" style="left:988.5px;top:433px;width:39px;height:26px;background:#63A8D4;border-radius:5px"></div>
<div class="a" style="left:1108.5px;top:433px;width:39px;height:26px;background:#63A8D4;border-radius:5px"></div>
<div class="a" style="left:1148.5px;top:433px;width:39px;height:26px;background:#63A8D4;border-radius:5px"></div>
<div class="a" style="left:1188.5px;top:433px;width:39px;height:26px;background:#63A8D4;border-radius:5px"></div>
<div class="a" style="left:1228.5px;top:433px;width:39px;height:26px;background:#63A8D4;border-radius:5px"></div>
<div class="a" style="left:1268.5px;top:433px;width:39px;height:26px;background:#63A8D4;border-radius:5px"></div>
<div class="a" style="left:1388.5px;top:433px;width:39px;height:26px;background:#63A8D4;border-radius:5px"></div>
<div class="a" style="left:1428.5px;top:433px;width:39px;height:26px;background:#63A8D4;border-radius:5px"></div>
<div class="a" style="left:1788.5px;top:583px;width:39px;height:26px;background:#63A8D4;border-radius:5px"></div>
<div class="a" style="left:1828.5px;top:583px;width:39px;height:26px;background:#63A8D4;border-radius:5px"></div>
<div class="a" style="left:1948.5px;top:583px;width:39px;height:26px;background:#63A8D4;border-radius:5px"></div>
<div class="a" style="left:1988.5px;top:583px;width:39px;height:26px;background:#63A8D4;border-radius:5px"></div>
<div class="a" style="left:2028.5px;top:583px;width:39px;height:26px;background:#63A8D4;border-radius:5px"></div>
<div class="a" style="left:2068.5px;top:583px;width:39px;height:26px;background:#63A8D4;border-radius:5px"></div>
<div class="a" style="left:2108.5px;top:583px;width:39px;height:26px;background:#63A8D4;border-radius:5px"></div>
<div class="a" style="left:2228.5px;top:583px;width:39px;height:26px;background:#63A8D4;border-radius:5px"></div>
<div class="a" style="left:2268.5px;top:583px;width:39px;height:26px;background:#63A8D4;border-radius:5px"></div>
<div class="a" style="left:2308.5px;top:583px;width:39px;height:26px;background:#63A8D4;border-radius:5px"></div>
<div class="a" style="left:2348.5px;top:583px;width:39px;height:26px;background:#63A8D4;border-radius:5px"></div>
<div class="a" style="left:2388.5px;top:583px;width:39px;height:26px;background:#63A8D4;border-radius:5px"></div>
<div class="a" style="left:1788.5px;top:633px;width:39px;height:26px;background:#63A8D4;border-radius:5px"></div>
<div class="a" style="left:1828.5px;top:633px;width:39px;height:26px;background:#63A8D4;border-radius:5px"></div>
<div class="a" style="left:1948.5px;top:633px;width:39px;height:26px;background:#63A8D4;border-radius:5px"></div>
<div class="a" style="left:1988.5px;top:633px;width:39px;height:26px;background:#63A8D4;border-radius:5px"></div>
<div class="a" style="left:2028.5px;top:633px;width:39px;height:26px;background:#63A8D4;border-radius:5px"></div>
<div class="a" style="left:2068.5px;top:633px;width:39px;height:26px;background:#63A8D4;border-radius:5px"></div>
<div class="a" style="left:2108.5px;top:633px;width:39px;height:26px;background:#63A8D4;border-radius:5px"></div>
<div class="a" style="left:2228.5px;top:633px;width:39px;height:26px;background:#63A8D4;border-radius:5px"></div>
<div class="a" style="left:2268.5px;top:633px;width:39px;height:26px;background:#63A8D4;border-radius:5px"></div>
<div class="a" style="left:2308.5px;top:633px;width:39px;height:26px;background:#63A8D4;border-radius:5px"></div>
<div class="a" style="left:2348.5px;top:633px;width:39px;height:26px;background:#63A8D4;border-radius:5px"></div>
<div class="a" style="left:2388.5px;top:633px;width:39px;height:26px;background:#63A8D4;border-radius:5px"></div>
<div class="a" style="left:1788.5px;top:683px;width:39px;height:26px;background:#63A8D4;border-radius:5px"></div>
<div class="a" style="left:1828.5px;top:683px;width:39px;height:26px;background:#63A8D4;border-radius:5px"></div>
<div class="a" style="left:1948.5px;top:683px;width:39px;height:26px;background:#63A8D4;border-radius:5px"></div>
<div class="a" style="left:1988.5px;top:683px;width:39px;height:26px;background:#63A8D4;border-radius:5px"></div>
<div class="a" style="left:2028.5px;top:683px;width:39px;height:26px;background:#63A8D4;border-radius:5px"></div>
<div class="a" style="left:2068.5px;top:683px;width:39px;height:26px;background:#63A8D4;border-radius:5px"></div>
<div class="a" style="left:2108.5px;top:683px;width:39px;height:26px;background:#63A8D4;border-radius:5px"></div>
<div class="a" style="left:2228.5px;top:683px;width:39px;height:26px;background:#63A8D4;border-radius:5px"></div>
<div class="a" style="left:2268.5px;top:683px;width:39px;height:26px;background:#63A8D4;border-radius:5px"></div>
<div class="a" style="left:2308.5px;top:683px;width:39px;height:26px;background:#63A8D4;border-radius:5px"></div>
<div class="a" style="left:2348.5px;top:683px;width:39px;height:26px;background:#63A8D4;border-radius:5px"></div>
<div class="a" style="left:2388.5px;top:683px;width:39px;height:26px;background:#63A8D4;border-radius:5px"></div>
<div class="a" style="left:1788px;top:533px;width:513px;height:25px;background:#A8168F;border-radius:6px 0 0 6px"></div>
<div class="a" style="left:2301px;top:533px;width:237px;height:25px;background:#E326C6"></div>
<svg class="a" style="left:0;top:0" width="2448" height="770" viewBox="1062 441 2448 770"><path d="M2530 636.5 H2570.5 V661.5 H2530.5 V936.5 H2567" fill="none" stroke="#BBC0D2" stroke-width="2.5"/><path d="M2557 927 L2568 936.5 L2557 946" fill="none" stroke="#BBC0D2" stroke-width="3"/></svg>
<div class="a" style="left:1508.5px;top:475.5px;width:40px;height:40px;background:#EDD37F"><svg class="a" style="left:0;top:0" width="40" height="40" viewBox="0 0 40 40"><path d="M20 6.5 L33 20 L20 33.5 L7 20 Z" fill="#fff"/></svg></div>
<div class="a" style="left:0px;top:0px;width:8px;height:770px;background:linear-gradient(to right, rgba(0,0,0,0.10), rgba(0,0,0,0))"></div>
</div>
<div class="a" style="left:3510px;top:441px;width:16px;height:770px;background:#fff"></div>
<div class="a" style="left:3512px;top:652px;width:14px;height:560px;background:#CBCBCB"></div>
<div class="a" style="left:58px;top:1211px;width:3468px;height:13px;background:#fff;border-radius:0 0 6px 6px"></div>
<div class="a" style="left:1765px;top:1212px;width:542px;height:12px;background:#CBCBCB"></div>
<div class="a" style="left:1789px;top:1228px;width:2px;height:69px;background:#B7C5D8"></div>
<div class="a" style="left:2545px;top:1228px;width:2px;height:69px;background:#B7C5D8"></div>
<div class="a" style="left:2899px;top:1228px;width:2px;height:69px;background:#B7C5D8"></div>
<div class="a" style="left:3077px;top:1228px;width:2px;height:69px;background:#B7C5D8"></div>
<div class="a" style="left:1821px;top:1243px;width:691px;height:39px;background:#fff;border-radius:8px"></div>
<div class="t" style="left:1824.5px;top:1248.99px;font-size:26px;color:#767676;font-weight:400;">Cerca...</div>
<svg class="a" style="left:2471px;top:1249px" width="30" height="30" viewBox="0 0 30 30"><circle cx="12.5" cy="12.5" r="9" fill="none" stroke="#222" stroke-width="2.6"/><path d="M19 19 L27 27" stroke="#222" stroke-width="2.8" stroke-linecap="round"/></svg>
<div class="a" style="left:2578px;top:1243px;width:288px;height:39px;background:#F7F8FA;border-radius:8px"></div>
<svg class="a" style="left:2603px;top:1252px" width="14" height="20" viewBox="0 0 14 20"><path d="M11 2 L3 10 L11 18" fill="none" stroke="#222" stroke-width="3"/></svg>
<div class="t" style="left:2654px;top:1251.38px;font-size:22px;color:#777;font-weight:400;">dd/mm/yyyy</div>
<svg class="a" style="left:2827px;top:1252px" width="14" height="20" viewBox="0 0 14 20"><path d="M3 2 L11 10 L3 18" fill="none" stroke="#222" stroke-width="3"/></svg>
<div class="a" style="left:2932px;top:1243px;width:51px;height:39px;background:#4FC3F1;border-radius:6px"><svg class="a" style="left:10px;top:4px" width="30" height="30" viewBox="0 0 30 30"><path d="M5 4 L25 4 Q27 4 27 6 L27 19 Q27 21 25 21 L16 21 L10 26 L10 21 L5 21 Q3 21 3 19 L3 6 Q3 4 5 4 Z" fill="none" stroke="#fff" stroke-width="2.4" stroke-linejoin="round"/><circle cx="10" cy="12.5" r="1.4" fill="#fff"/><circle cx="15" cy="12.5" r="1.4" fill="#fff"/><circle cx="20" cy="12.5" r="1.4" fill="#fff"/></svg></div>
<div class="a" style="left:2993px;top:1243px;width:51px;height:39px;background:#fff;border-radius:6px"><svg class="a" style="left:10px;top:4px" width="30" height="30" viewBox="0 0 30 30"><path d="M7 3 L7 27 M15 3 L15 27 M23 3 L23 27" stroke="#222" stroke-width="2.4"/><circle cx="7" cy="20" r="3.3" fill="#fff" stroke="#222" stroke-width="2.4"/><circle cx="15" cy="9" r="3.3" fill="#fff" stroke="#222" stroke-width="2.4"/><circle cx="23" cy="20" r="3.3" fill="#fff" stroke="#222" stroke-width="2.4"/></svg></div>
<svg class="a" style="left:3124px;top:1251px" width="30" height="24" viewBox="0 0 30 24"><circle cx="10" cy="6" r="5" fill="#333"/><circle cx="21" cy="6" r="4.5" fill="#333"/><path d="M0.5 22 C0.5 15 4 12.5 10 12.5 C16 12.5 19.5 15 19.5 22 Z" fill="#333"/><path d="M18 12.8 C19.5 12.5 20 12.5 21 12.5 C26 12.5 29.5 15 29.5 22 L21.5 22 C21.5 17.5 20.5 14.5 18 12.8 Z" fill="#333"/></svg>
<div class="a" style="left:3179.5px;top:1244.5px;width:313.5px;height:37px;background:#fff;border:2px solid #C9C9C9;border-radius:3px"></div>
<div class="t" style="left:3187px;top:1251.38px;font-size:22px;color:#111;font-weight:400;">Team di progetto</div>
<svg class="a" style="left:3466px;top:1258px" width="16" height="10" viewBox="0 0 16 10"><path d="M0 0 L16 0 L8 9 Z" fill="#777"/></svg>
<div class="a" style="left:58px;top:1297px;width:1004px;height:655px;background:#fff"></div>
<div class="a" style="left:58px;top:1397px;width:1004px;height:1px;background:#EBEBEB"></div>
<div class="a" style="left:58px;top:1297px;width:1004px;height:2px;background:#ECECEC"></div>
<div class="a" style="left:559px;top:1297px;width:2px;height:601px;background:#EBEBEB"></div>
<svg class="a" style="left:78.5px;top:1340px" width="16" height="12" viewBox="0 0 16 12"><path d="M2.6,1.6 L8.2,7.2 L13.8,1.6" fill="none" stroke="#111" stroke-width="2.8"/></svg>
<div class="t" style="left:101px;top:1334.57px;font-size:26.5px;color:#555;font-weight:400;">Risorsa</div>
<div class="t" style="left:749px;top:1323.27px;font-size:23.9px;color:#555;font-weight:400;">Disponbilità</div>
<div class="t" style="left:744.5px;top:1350.68px;font-size:24px;color:#555;font-weight:400;"><span style="text-decoration:underline">23 Jun</span> - <span style="text-decoration:underline">8 Jul</span> 25</div>
<div class="t" style="right:2541px;top:1350.26px;font-size:24.5px;color:#555;font-weight:400;">24h / 3g</div>
<div class="a" style="left:62px;top:1398px;width:1000px;height:50px;background:#EFEFEF"></div>
<div class="a" style="left:58px;top:1398px;width:4px;height:501px;background:#5EC36A"></div>
<svg class="a" style="left:82.5px;top:1414.5px" width="16" height="12" viewBox="0 0 16 12"><path d="M2.6,1.6 L8.2,7.2 L13.8,1.6" fill="none" stroke="#111" stroke-width="2.8"/></svg>
<div class="t" style="left:105px;top:1410.22px;font-size:27.5px;color:#555;font-weight:400;">Team di progetto</div>
<svg class="a" style="left:115px;top:1464.5px" width="16" height="12" viewBox="0 0 16 12"><path d="M2.6,1.6 L8.2,7.2 L13.8,1.6" fill="none" stroke="#111" stroke-width="2.8"/></svg>
<div class="t" style="left:137.5px;top:1461.07px;font-size:26.5px;color:#555;font-weight:400;">Project Manager</div>
<svg class="a" style="left:145px;top:1514.5px" width="20" height="21" viewBox="0 0 20 21"><circle cx="9.9" cy="4.75" r="3.8" fill="#777"/><path d="M1,19.9 C1,14.5 5,11.25 9.95,11.25 C14.9,11.25 18.9,14.5 18.9,19.9 Z" fill="#777"/></svg>
<div class="t" style="left:168.5px;top:1511.07px;font-size:26.5px;color:#555;font-weight:400;">Balestreno Renato</div>
<div class="t" style="right:2542px;top:1512.52px;font-size:23.6px;color:#1F8B1F;font-weight:400;">25.0% (24h / 3g)</div>
<svg class="a" style="left:115px;top:1564.5px" width="16" height="12" viewBox="0 0 16 12"><path d="M2.6,1.6 L8.2,7.2 L13.8,1.6" fill="none" stroke="#111" stroke-width="2.8"/></svg>
<div class="t" style="left:137.5px;top:1561.07px;font-size:26.5px;color:#555;font-weight:400;">Product Manager</div>
<svg class="a" style="left:145px;top:1614.5px" width="20" height="21" viewBox="0 0 20 21"><circle cx="9.9" cy="4.75" r="3.8" fill="#777"/><path d="M1,19.9 C1,14.5 5,11.25 9.95,11.25 C14.9,11.25 18.9,14.5 18.9,19.9 Z" fill="#777"/></svg>
<div class="t" style="left:168.5px;top:1611.07px;font-size:26.5px;color:#555;font-weight:400;">LLorento Renzo</div>
<div class="t" style="right:2542px;top:1612.52px;font-size:23.6px;color:#9C1010;font-weight:400;">0.0% (0h / 0g)</div>
<svg class="a" style="left:115px;top:1664.5px" width="16" height="12" viewBox="0 0 16 12"><path d="M2.6,1.6 L8.2,7.2 L13.8,1.6" fill="none" stroke="#111" stroke-width="2.8"/></svg>
<div class="t" style="left:137.5px;top:1661.07px;font-size:26.5px;color:#555;font-weight:400;">Project Analysts</div>
<svg class="a" style="left:145px;top:1714.5px" width="20" height="21" viewBox="0 0 20 21"><circle cx="9.9" cy="4.75" r="3.8" fill="#777"/><path d="M1,19.9 C1,14.5 5,11.25 9.95,11.25 C14.9,11.25 18.9,14.5 18.9,19.9 Z" fill="#777"/></svg>
<div class="t" style="left:168.5px;top:1711.07px;font-size:26.5px;color:#555;font-weight:400;">Pepesale Enrico</div>
<div class="t" style="right:2542px;top:1712.52px;font-size:23.6px;color:#9C1010;font-weight:400;">0.0% (0h / 0g)</div>
<svg class="a" style="left:115px;top:1764.5px" width="16" height="12" viewBox="0 0 16 12"><path d="M2.6,1.6 L8.2,7.2 L13.8,1.6" fill="none" stroke="#111" stroke-width="2.8"/></svg>
<div class="t" style="left:137.5px;top:1761.07px;font-size:26.5px;color:#555;font-weight:400;">Product Developer</div>
<svg class="a" style="left:145px;top:1814.5px" width="20" height="21" viewBox="0 0 20 21"><circle cx="9.9" cy="4.75" r="3.8" fill="#777"/><path d="M1,19.9 C1,14.5 5,11.25 9.95,11.25 C14.9,11.25 18.9,14.5 18.9,19.9 Z" fill="#777"/></svg>
<div class="t" style="left:168.5px;top:1811.07px;font-size:26.5px;color:#555;font-weight:400;">Manfroi Luca</div>
<div class="t" style="right:2542px;top:1812.52px;font-size:23.6px;color:#9C1010;font-weight:400;">0.0% (0h / 0g)</div>
<svg class="a" style="left:145px;top:1864.5px" width="20" height="21" viewBox="0 0 20 21"><circle cx="9.9" cy="4.75" r="3.8" fill="#777"/><path d="M1,19.9 C1,14.5 5,11.25 9.95,11.25 C14.9,11.25 18.9,14.5 18.9,19.9 Z" fill="#777"/></svg>
<div class="t" style="left:168.5px;top:1861.07px;font-size:26.5px;color:#555;font-weight:400;">Pierrotni Leonard</div>
<div class="t" style="right:2542px;top:1862.52px;font-size:23.6px;color:#9C1010;font-weight:400;">0.0% (0h / 0g)</div>
<div class="a" style="left:1062px;top:1297px;width:2448px;height:655px;overflow:hidden;background:#fff">
<div class="a" style="left:-12px;top:51px;width:40px;height:604px;background:#F6F6F6"></div>
<div class="a" style="left:188px;top:51px;width:40px;height:604px;background:#F6F6F6"></div>
<div class="a" style="left:228px;top:51px;width:40px;height:604px;background:#F6F6F6"></div>
<div class="a" style="left:468px;top:51px;width:40px;height:604px;background:#F6F6F6"></div>
<div class="a" style="left:508px;top:51px;width:40px;height:604px;background:#F6F6F6"></div>
<div class="a" style="left:548px;top:51px;width:40px;height:604px;background:#DEF1F9"></div>
<div class="a" style="left:748px;top:51px;width:40px;height:604px;background:#F6F6F6"></div>
<div class="a" style="left:788px;top:51px;width:40px;height:604px;background:#F6F6F6"></div>
<div class="a" style="left:1028px;top:51px;width:40px;height:604px;background:#F6F6F6"></div>
<div class="a" style="left:1068px;top:51px;width:40px;height:604px;background:#F6F6F6"></div>
<div class="a" style="left:1308px;top:51px;width:40px;height:604px;background:#F6F6F6"></div>
<div class="a" style="left:1348px;top:51px;width:40px;height:604px;background:#F6F6F6"></div>
<div class="a" style="left:1588px;top:51px;width:40px;height:604px;background:#F6F6F6"></div>
<div class="a" style="left:1628px;top:51px;width:40px;height:604px;background:#F6F6F6"></div>
<div class="a" style="left:1868px;top:51px;width:40px;height:604px;background:#F6F6F6"></div>
<div class="a" style="left:1908px;top:51px;width:40px;height:604px;background:#F6F6F6"></div>
<div class="a" style="left:2148px;top:51px;width:40px;height:604px;background:#F6F6F6"></div>
<div class="a" style="left:2188px;top:51px;width:40px;height:604px;background:#F6F6F6"></div>
<div class="a" style="left:2428px;top:51px;width:40px;height:604px;background:#F6F6F6"></div>
<div class="a" style="left:-12px;top:102px;width:40px;height:50px;background:#E9E9E9"></div>
<div class="a" style="left:28px;top:102px;width:40px;height:50px;background:#EFEFEF"></div>
<div class="a" style="left:68px;top:102px;width:40px;height:50px;background:#EFEFEF"></div>
<div class="a" style="left:108px;top:102px;width:40px;height:50px;background:#EFEFEF"></div>
<div class="a" style="left:148px;top:102px;width:40px;height:50px;background:#EFEFEF"></div>
<div class="a" style="left:188px;top:102px;width:40px;height:50px;background:#E9E9E9"></div>
<div class="a" style="left:228px;top:102px;width:40px;height:50px;background:#E9E9E9"></div>
<div class="a" style="left:268px;top:102px;width:40px;height:50px;background:#EFEFEF"></div>
<div class="a" style="left:308px;top:102px;width:40px;height:50px;background:#EFEFEF"></div>
<div class="a" style="left:348px;top:102px;width:40px;height:50px;background:#EFEFEF"></div>
<div class="a" style="left:388px;top:102px;width:40px;height:50px;background:#EFEFEF"></div>
<div class="a" style="left:428px;top:102px;width:40px;height:50px;background:#EFEFEF"></div>
<div class="a" style="left:468px;top:102px;width:40px;height:50px;background:#E9E9E9"></div>
<div class="a" style="left:508px;top:102px;width:40px;height:50px;background:#E9E9E9"></div>
<div class="a" style="left:548px;top:102px;width:40px;height:50px;background:#D7E5EC"></div>
<div class="a" style="left:588px;top:102px;width:40px;height:50px;background:#EFEFEF"></div>
<div class="a" style="left:628px;top:102px;width:40px;height:50px;background:#EFEFEF"></div>
<div class="a" style="left:668px;top:102px;width:40px;height:50px;background:#EFEFEF"></div>
<div class="a" style="left:708px;top:102px;width:40px;height:50px;background:#EFEFEF"></div>
<div class="a" style="left:748px;top:102px;width:40px;height:50px;background:#E9E9E9"></div>
<div class="a" style="left:788px;top:102px;width:40px;height:50px;background:#E9E9E9"></div>
<div class="a" style="left:828px;top:102px;width:40px;height:50px;background:#EFEFEF"></div>
<div class="a" style="left:868px;top:102px;width:40px;height:50px;background:#EFEFEF"></div>
<div class="a" style="left:908px;top:102px;width:40px;height:50px;background:#EFEFEF"></div>
<div class="a" style="left:948px;top:102px;width:40px;height:50px;background:#EFEFEF"></div>
<div class="a" style="left:988px;top:102px;width:40px;height:50px;background:#EFEFEF"></div>
<div class="a" style="left:1028px;top:102px;width:40px;height:50px;background:#E9E9E9"></div>
<div class="a" style="left:1068px;top:102px;width:40px;height:50px;background:#E9E9E9"></div>
<div class="a" style="left:1108px;top:102px;width:40px;height:50px;background:#EFEFEF"></div>
<div class="a" style="left:1148px;top:102px;width:40px;height:50px;background:#EFEFEF"></div>
<div class="a" style="left:1188px;top:102px;width:40px;height:50px;background:#EFEFEF"></div>
<div class="a" style="left:1228px;top:102px;width:40px;height:50px;background:#EFEFEF"></div>
<div class="a" style="left:1268px;top:102px;width:40px;height:50px;background:#EFEFEF"></div>
<div class="a" style="left:1308px;top:102px;width:40px;height:50px;background:#E9E9E9"></div>
<div class="a" style="left:1348px;top:102px;width:40px;height:50px;background:#E9E9E9"></div>
<div class="a" style="left:1388px;top:102px;width:40px;height:50px;background:#EFEFEF"></div>
<div class="a" style="left:1428px;top:102px;width:40px;height:50px;background:#EFEFEF"></div>
<div class="a" style="left:1468px;top:102px;width:40px;height:50px;background:#EFEFEF"></div>
<div class="a" style="left:1508px;top:102px;width:40px;height:50px;background:#EFEFEF"></div>
<div class="a" style="left:1548px;top:102px;width:40px;height:50px;background:#EFEFEF"></div>
<div class="a" style="left:1588px;top:102px;width:40px;height:50px;background:#E9E9E9"></div>
<div class="a" style="left:1628px;top:102px;width:40px;height:50px;background:#E9E9E9"></div>
<div class="a" style="left:1668px;top:102px;width:40px;height:50px;background:#EFEFEF"></div>
<div class="a" style="left:1708px;top:102px;width:40px;height:50px;background:#EFEFEF"></div>
<div class="a" style="left:1748px;top:102px;width:40px;height:50px;background:#EFEFEF"></div>
<div class="a" style="left:1788px;top:102px;width:40px;height:50px;background:#EFEFEF"></div>
<div class="a" style="left:1828px;top:102px;width:40px;height:50px;background:#EFEFEF"></div>
<div class="a" style="left:1868px;top:102px;width:40px;height:50px;background:#E9E9E9"></div>
<div class="a" style="left:1908px;top:102px;width:40px;height:50px;background:#E9E9E9"></div>
<div class="a" style="left:1948px;top:102px;width:40px;height:50px;background:#EFEFEF"></div>
<div class="a" style="left:1988px;top:102px;width:40px;height:50px;background:#EFEFEF"></div>
<div class="a" style="left:2028px;top:102px;width:40px;height:50px;background:#EFEFEF"></div>
<div class="a" style="left:2068px;top:102px;width:40px;height:50px;background:#EFEFEF"></div>
<div class="a" style="left:2108px;top:102px;width:40px;height:50px;background:#EFEFEF"></div>
<div class="a" style="left:2148px;top:102px;width:40px;height:50px;background:#E9E9E9"></div>
<div class="a" style="left:2188px;top:102px;width:40px;height:50px;background:#E9E9E9"></div>
<div class="a" style="left:2228px;top:102px;width:40px;height:50px;background:#EFEFEF"></div>
<div class="a" style="left:2268px;top:102px;width:40px;height:50px;background:#EFEFEF"></div>
<div class="a" style="left:2308px;top:102px;width:40px;height:50px;background:#EFEFEF"></div>
<div class="a" style="left:2348px;top:102px;width:40px;height:50px;background:#EFEFEF"></div>
<div class="a" style="left:2388px;top:102px;width:40px;height:50px;background:#EFEFEF"></div>
<div class="a" style="left:2428px;top:102px;width:40px;height:50px;background:#E9E9E9"></div>
<div class="a" style="left:-12px;top:51px;width:1px;height:604px;background:#E4E4E4"></div>
<div class="a" style="left:28px;top:51px;width:1px;height:604px;background:#E4E4E4"></div>
<div class="a" style="left:68px;top:51px;width:1px;height:604px;background:#E4E4E4"></div>
<div class="a" style="left:108px;top:51px;width:1px;height:604px;background:#E4E4E4"></div>
<div class="a" style="left:148px;top:51px;width:1px;height:604px;background:#E4E4E4"></div>
<div class="a" style="left:188px;top:51px;width:1px;height:604px;background:#E4E4E4"></div>
<div class="a" style="left:228px;top:51px;width:1px;height:604px;background:#E4E4E4"></div>
<div class="a" style="left:268px;top:51px;width:1px;height:604px;background:#E4E4E4"></div>
<div class="a" style="left:308px;top:51px;width:1px;height:604px;background:#E4E4E4"></div>
<div class="a" style="left:348px;top:51px;width:1px;height:604px;background:#E4E4E4"></div>
<div class="a" style="left:388px;top:51px;width:1px;height:604px;background:#E4E4E4"></div>
<div class="a" style="left:428px;top:51px;width:1px;height:604px;background:#E4E4E4"></div>
<div class="a" style="left:468px;top:51px;width:1px;height:604px;background:#E4E4E4"></div>
<div class="a" style="left:508px;top:51px;width:1px;height:604px;background:#E4E4E4"></div>
<div class="a" style="left:548px;top:51px;width:1px;height:604px;background:#E4E4E4"></div>
<div class="a" style="left:588px;top:51px;width:1px;height:604px;background:#E4E4E4"></div>
<div class="a" style="left:628px;top:51px;width:1px;height:604px;background:#E4E4E4"></div>
<div class="a" style="left:668px;top:51px;width:1px;height:604px;background:#E4E4E4"></div>
<div class="a" style="left:708px;top:51px;width:1px;height:604px;background:#E4E4E4"></div>
<div class="a" style="left:748px;top:51px;width:1px;height:604px;background:#E4E4E4"></div>
<div class="a" style="left:788px;top:51px;width:1px;height:604px;background:#E4E4E4"></div>
<div class="a" style="left:828px;top:51px;width:1px;height:604px;background:#E4E4E4"></div>
<div class="a" style="left:868px;top:51px;width:1px;height:604px;background:#E4E4E4"></div>
<div class="a" style="left:908px;top:51px;width:1px;height:604px;background:#E4E4E4"></div>
<div class="a" style="left:948px;top:51px;width:1px;height:604px;background:#E4E4E4"></div>
<div class="a" style="left:988px;top:51px;width:1px;height:604px;background:#E4E4E4"></div>
<div class="a" style="left:1028px;top:51px;width:1px;height:604px;background:#E4E4E4"></div>
<div class="a" style="left:1068px;top:51px;width:1px;height:604px;background:#E4E4E4"></div>
<div class="a" style="left:1108px;top:51px;width:1px;height:604px;background:#E4E4E4"></div>
<div class="a" style="left:1148px;top:51px;width:1px;height:604px;background:#E4E4E4"></div>
<div class="a" style="left:1188px;top:51px;width:1px;height:604px;background:#E4E4E4"></div>
<div class="a" style="left:1228px;top:51px;width:1px;height:604px;background:#E4E4E4"></div>
<div class="a" style="left:1268px;top:51px;width:1px;height:604px;background:#E4E4E4"></div>
<div class="a" style="left:1308px;top:51px;width:1px;height:604px;background:#E4E4E4"></div>
<div class="a" style="left:1348px;top:51px;width:1px;height:604px;background:#E4E4E4"></div>
<div class="a" style="left:1388px;top:51px;width:1px;height:604px;background:#E4E4E4"></div>
<div class="a" style="left:1428px;top:51px;width:1px;height:604px;background:#E4E4E4"></div>
<div class="a" style="left:1468px;top:51px;width:1px;height:604px;background:#E4E4E4"></div>
<div class="a" style="left:1508px;top:51px;width:1px;height:604px;background:#E4E4E4"></div>
<div class="a" style="left:1548px;top:51px;width:1px;height:604px;background:#E4E4E4"></div>
<div class="a" style="left:1588px;top:51px;width:1px;height:604px;background:#E4E4E4"></div>
<div class="a" style="left:1628px;top:51px;width:1px;height:604px;background:#E4E4E4"></div>
<div class="a" style="left:1668px;top:51px;width:1px;height:604px;background:#E4E4E4"></div>
<div class="a" style="left:1708px;top:51px;width:1px;height:604px;background:#E4E4E4"></div>
<div class="a" style="left:1748px;top:51px;width:1px;height:604px;background:#E4E4E4"></div>
<div class="a" style="left:1788px;top:51px;width:1px;height:604px;background:#E4E4E4"></div>
<div class="a" style="left:1828px;top:51px;width:1px;height:604px;background:#E4E4E4"></div>
<div class="a" style="left:1868px;top:51px;width:1px;height:604px;background:#E4E4E4"></div>
<div class="a" style="left:1908px;top:51px;width:1px;height:604px;background:#E4E4E4"></div>
<div class="a" style="left:1948px;top:51px;width:1px;height:604px;background:#E4E4E4"></div>
<div class="a" style="left:1988px;top:51px;width:1px;height:604px;background:#E4E4E4"></div>
<div class="a" style="left:2028px;top:51px;width:1px;height:604px;background:#E4E4E4"></div>
<div class="a" style="left:2068px;top:51px;width:1px;height:604px;background:#E4E4E4"></div>
<div class="a" style="left:2108px;top:51px;width:1px;height:604px;background:#E4E4E4"></div>
<div class="a" style="left:2148px;top:51px;width:1px;height:604px;background:#E4E4E4"></div>
<div class="a" style="left:2188px;top:51px;width:1px;height:604px;background:#E4E4E4"></div>
<div class="a" style="left:2228px;top:51px;width:1px;height:604px;background:#E4E4E4"></div>
<div class="a" style="left:2268px;top:51px;width:1px;height:604px;background:#E4E4E4"></div>
<div class="a" style="left:2308px;top:51px;width:1px;height:604px;background:#E4E4E4"></div>
<div class="a" style="left:2348px;top:51px;width:1px;height:604px;background:#E4E4E4"></div>
<div class="a" style="left:2388px;top:51px;width:1px;height:604px;background:#E4E4E4"></div>
<div class="a" style="left:2428px;top:51px;width:1px;height:604px;background:#E4E4E4"></div>
<div class="a" style="left:1148px;top:2px;width:2px;height:653px;background:#D2D2D2"></div>
<div class="a" style="left:2388px;top:2px;width:2px;height:653px;background:#D2D2D2"></div>
<div class="a" style="left:0px;top:0px;width:2448px;height:2px;background:#ECECEC"></div>
<div class="a" style="left:0px;top:50px;width:2448px;height:2px;background:#E8E8E8"></div>
<div class="a" style="left:0px;top:100px;width:2448px;height:2px;background:#E8E8E8"></div>
<div class="t" style="left:-36.0px;top:11.14px;font-size:27px;font-weight:700;color:#555">Giugno 2025</div>
<div class="t" style="left:1168px;top:11.14px;font-size:27px;font-weight:700;color:#555;transform:scaleX(1.04);transform-origin:0 0">luglio 2025</div>
<div class="t" style="left:2408px;top:11.14px;font-size:27px;font-weight:700;color:#555">agosto 2025</div>
<div class="t" style="left:-12px;width:40px;text-align:center;top:62.41px;font-size:25.5px;color:#4a4a4a">02</div>
<div class="t" style="left:28px;width:40px;text-align:center;top:62.41px;font-size:25.5px;color:#4a4a4a">03</div>
<div class="t" style="left:68px;width:40px;text-align:center;top:62.41px;font-size:25.5px;color:#4a4a4a">04</div>
<div class="t" style="left:108px;width:40px;text-align:center;top:62.41px;font-size:25.5px;color:#4a4a4a">05</div>
<div class="t" style="left:148px;width:40px;text-align:center;top:62.41px;font-size:25.5px;color:#4a4a4a">06</div>
<div class="t" style="left:188px;width:40px;text-align:center;top:62.41px;font-size:25.5px;color:#4a4a4a">07</div>
<div class="t" style="left:228px;width:40px;text-align:center;top:62.41px;font-size:25.5px;color:#4a4a4a">08</div>
<div class="t" style="left:268px;width:40px;text-align:center;top:62.41px;font-size:25.5px;color:#4a4a4a">09</div>
<div class="t" style="left:308px;width:40px;text-align:center;top:62.41px;font-size:25.5px;color:#4a4a4a">10</div>
<div class="t" style="left:348px;width:40px;text-align:center;top:62.41px;font-size:25.5px;color:#4a4a4a">11</div>
<div class="t" style="left:388px;width:40px;text-align:center;top:62.41px;font-size:25.5px;color:#4a4a4a">12</div>
<div class="t" style="left:428px;width:40px;text-align:center;top:62.41px;font-size:25.5px;color:#4a4a4a">13</div>
<div class="t" style="left:468px;width:40px;text-align:center;top:62.41px;font-size:25.5px;color:#4a4a4a">14</div>
<div class="t" style="left:508px;width:40px;text-align:center;top:62.41px;font-size:25.5px;color:#4a4a4a">15</div>
<div class="t" style="left:548px;width:40px;text-align:center;top:62.41px;font-size:25.5px;color:#4a4a4a">16</div>
<div class="t" style="left:588px;width:40px;text-align:center;top:62.41px;font-size:25.5px;color:#4a4a4a">17</div>
<div class="t" style="left:628px;width:40px;text-align:center;top:62.41px;font-size:25.5px;color:#4a4a4a">18</div>
<div class="t" style="left:668px;width:40px;text-align:center;top:62.41px;font-size:25.5px;color:#4a4a4a">19</div>
<div class="t" style="left:708px;width:40px;text-align:center;top:62.41px;font-size:25.5px;color:#4a4a4a">20</div>
<div class="t" style="left:748px;width:40px;text-align:center;top:62.41px;font-size:25.5px;color:#4a4a4a">21</div>
<div class="t" style="left:788px;width:40px;text-align:center;top:62.41px;font-size:25.5px;color:#4a4a4a">22</div>
<div class="t" style="left:828px;width:40px;text-align:center;top:62.41px;font-size:25.5px;color:#4a4a4a">23</div>
<div class="t" style="left:868px;width:40px;text-align:center;top:62.41px;font-size:25.5px;color:#4a4a4a">24</div>
<div class="t" style="left:908px;width:40px;text-align:center;top:62.41px;font-size:25.5px;color:#4a4a4a">25</div>
<div class="t" style="left:948px;width:40px;text-align:center;top:62.41px;font-size:25.5px;color:#4a4a4a">26</div>
<div class="t" style="left:988px;width:40px;text-align:center;top:62.41px;font-size:25.5px;color:#4a4a4a">27</div>
<div class="t" style="left:1028px;width:40px;text-align:center;top:62.41px;font-size:25.5px;color:#4a4a4a">28</div>
<div class="t" style="left:1068px;width:40px;text-align:center;top:62.41px;font-size:25.5px;color:#4a4a4a">29</div>
<div class="t" style="left:1108px;width:40px;text-align:center;top:62.41px;font-size:25.5px;color:#4a4a4a">30</div>
<div class="t" style="left:1148px;width:40px;text-align:center;top:62.41px;font-size:25.5px;color:#4a4a4a">01</div>
<div class="t" style="left:1188px;width:40px;text-align:center;top:62.41px;font-size:25.5px;color:#4a4a4a">02</div>
<div class="t" style="left:1228px;width:40px;text-align:center;top:62.41px;font-size:25.5px;color:#4a4a4a">03</div>
<div class="t" style="left:1268px;width:40px;text-align:center;top:62.41px;font-size:25.5px;color:#4a4a4a">04</div>
<div class="t" style="left:1308px;width:40px;text-align:center;top:62.41px;font-size:25.5px;color:#4a4a4a">05</div>
<div class="t" style="left:1348px;width:40px;text-align:center;top:62.41px;font-size:25.5px;color:#4a4a4a">06</div>
<div class="t" style="left:1388px;width:40px;text-align:center;top:62.41px;font-size:25.5px;color:#4a4a4a">07</div>
<div class="t" style="left:1428px;width:40px;text-align:center;top:62.41px;font-size:25.5px;color:#4a4a4a">08</div>
<div class="t" style="left:1468px;width:40px;text-align:center;top:62.41px;font-size:25.5px;color:#4a4a4a">09</div>
<div class="t" style="left:1508px;width:40px;text-align:center;top:62.41px;font-size:25.5px;color:#4a4a4a">10</div>
<div class="t" style="left:1548px;width:40px;text-align:center;top:62.41px;font-size:25.5px;color:#4a4a4a">11</div>
<div class="t" style="left:1588px;width:40px;text-align:center;top:62.41px;font-size:25.5px;color:#4a4a4a">12</div>
<div class="t" style="left:1628px;width:40px;text-align:center;top:62.41px;font-size:25.5px;color:#4a4a4a">13</div>
<div class="t" style="left:1668px;width:40px;text-align:center;top:62.41px;font-size:25.5px;color:#4a4a4a">14</div>
<div class="t" style="left:1708px;width:40px;text-align:center;top:62.41px;font-size:25.5px;color:#4a4a4a">15</div>
<div class="t" style="left:1748px;width:40px;text-align:center;top:62.41px;font-size:25.5px;color:#4a4a4a">16</div>
<div class="t" style="left:1788px;width:40px;text-align:center;top:62.41px;font-size:25.5px;color:#4a4a4a">17</div>
<div class="t" style="left:1828px;width:40px;text-align:center;top:62.41px;font-size:25.5px;color:#4a4a4a">18</div>
<div class="t" style="left:1868px;width:40px;text-align:center;top:62.41px;font-size:25.5px;color:#4a4a4a">19</div>
<div class="t" style="left:1908px;width:40px;text-align:center;top:62.41px;font-size:25.5px;color:#4a4a4a">20</div>
<div class="t" style="left:1948px;width:40px;text-align:center;top:62.41px;font-size:25.5px;color:#4a4a4a">21</div>
<div class="t" style="left:1988px;width:40px;text-align:center;top:62.41px;font-size:25.5px;color:#4a4a4a">22</div>
<div class="t" style="left:2028px;width:40px;text-align:center;top:62.41px;font-size:25.5px;color:#4a4a4a">23</div>
<div class="t" style="left:2068px;width:40px;text-align:center;top:62.41px;font-size:25.5px;color:#4a4a4a">24</div>
<div class="t" style="left:2108px;width:40px;text-align:center;top:62.41px;font-size:25.5px;color:#4a4a4a">25</div>
<div class="t" style="left:2148px;width:40px;text-align:center;top:62.41px;font-size:25.5px;color:#4a4a4a">26</div>
<div class="t" style="left:2188px;width:40px;text-align:center;top:62.41px;font-size:25.5px;color:#4a4a4a">27</div>
<div class="t" style="left:2228px;width:40px;text-align:center;top:62.41px;font-size:25.5px;color:#4a4a4a">28</div>
<div class="t" style="left:2268px;width:40px;text-align:center;top:62.41px;font-size:25.5px;color:#4a4a4a">29</div>
<div class="t" style="left:2308px;width:40px;text-align:center;top:62.41px;font-size:25.5px;color:#4a4a4a">30</div>
<div class="t" style="left:2348px;width:40px;text-align:center;top:62.41px;font-size:25.5px;color:#4a4a4a">31</div>
<div class="t" style="left:2388px;width:40px;text-align:center;top:62.41px;font-size:25.5px;color:#4a4a4a">01</div>
<div class="t" style="left:2428px;width:40px;text-align:center;top:62.41px;font-size:25.5px;color:#4a4a4a">02</div>
<div class="a" style="left:838px;top:0px;width:630px;height:655px;background:rgba(140,245,115,0.15)"></div>
<div class="t" style="left:1127px;top:-0.51px;font-size:26px;font-style:italic;color:#0E3A62">16gg</div>
<div class="a" style="left:28px;top:202px;width:40px;height:50px;background:#EDD8F2"></div>
<div class="a" style="left:28px;top:202px;width:1px;height:50px;background:rgba(120,80,130,0.10)"></div>
<div class="t" style="left:28px;width:40px;text-align:center;top:215.06px;font-size:24.5px;color:#555">8</div>
<div class="a" style="left:68px;top:202px;width:40px;height:50px;background:#EDD8F2"></div>
<div class="a" style="left:68px;top:202px;width:1px;height:50px;background:rgba(120,80,130,0.10)"></div>
<div class="t" style="left:68px;width:40px;text-align:center;top:215.06px;font-size:24.5px;color:#555">8</div>
<div class="a" style="left:108px;top:202px;width:40px;height:50px;background:#EDD8F2"></div>
<div class="a" style="left:108px;top:202px;width:1px;height:50px;background:rgba(120,80,130,0.10)"></div>
<div class="t" style="left:108px;width:40px;text-align:center;top:215.06px;font-size:24.5px;color:#555">8</div>
<div class="a" style="left:148px;top:202px;width:40px;height:50px;background:#EDD8F2"></div>
<div class="a" style="left:148px;top:202px;width:1px;height:50px;background:rgba(120,80,130,0.10)"></div>
<div class="t" style="left:148px;width:40px;text-align:center;top:215.06px;font-size:24.5px;color:#555">8</div>
<div class="a" style="left:268px;top:202px;width:40px;height:50px;background:#EDD8F2"></div>
<div class="a" style="left:268px;top:202px;width:1px;height:50px;background:rgba(120,80,130,0.10)"></div>
<div class="t" style="left:268px;width:40px;text-align:center;top:215.06px;font-size:24.5px;color:#555">8</div>
<div class="a" style="left:308px;top:202px;width:40px;height:50px;background:#EDD8F2"></div>
<div class="a" style="left:308px;top:202px;width:1px;height:50px;background:rgba(120,80,130,0.10)"></div>
<div class="t" style="left:308px;width:40px;text-align:center;top:215.06px;font-size:24.5px;color:#555">8</div>
<div class="a" style="left:348px;top:202px;width:40px;height:50px;background:#EDD8F2"></div>
<div class="a" style="left:348px;top:202px;width:1px;height:50px;background:rgba(120,80,130,0.10)"></div>
<div class="t" style="left:348px;width:40px;text-align:center;top:215.06px;font-size:24.5px;color:#555">8</div>
<div class="a" style="left:388px;top:202px;width:40px;height:50px;background:#EDD8F2"></div>
<div class="a" style="left:388px;top:202px;width:1px;height:50px;background:rgba(120,80,130,0.10)"></div>
<div class="t" style="left:388px;width:40px;text-align:center;top:215.06px;font-size:24.5px;color:#555">8</div>
<div class="a" style="left:428px;top:202px;width:40px;height:50px;background:#EDD8F2"></div>
<div class="a" style="left:428px;top:202px;width:1px;height:50px;background:rgba(120,80,130,0.10)"></div>
<div class="t" style="left:428px;width:40px;text-align:center;top:215.06px;font-size:24.5px;color:#555">8</div>
<div class="a" style="left:548px;top:202px;width:40px;height:50px;background:#D6CBEE"></div>
<div class="a" style="left:548px;top:202px;width:1px;height:50px;background:rgba(120,80,130,0.10)"></div>
<div class="t" style="left:548px;width:40px;text-align:center;top:215.06px;font-size:24.5px;color:#555">8</div>
<div class="a" style="left:588px;top:202px;width:40px;height:50px;background:#EDD8F2"></div>
<div class="a" style="left:588px;top:202px;width:1px;height:50px;background:rgba(120,80,130,0.10)"></div>
<div class="t" style="left:588px;width:40px;text-align:center;top:215.06px;font-size:24.5px;color:#555">8</div>
<div class="a" style="left:628px;top:202px;width:40px;height:50px;background:#EDD8F2"></div>
<div class="a" style="left:628px;top:202px;width:1px;height:50px;background:rgba(120,80,130,0.10)"></div>
<div class="t" style="left:628px;width:40px;text-align:center;top:215.06px;font-size:24.5px;color:#555">8</div>
<div class="a" style="left:668px;top:202px;width:40px;height:50px;background:#EDD8F2"></div>
<div class="a" style="left:668px;top:202px;width:1px;height:50px;background:rgba(120,80,130,0.10)"></div>
<div class="t" style="left:668px;width:40px;text-align:center;top:215.06px;font-size:24.5px;color:#555">8</div>
<div class="a" style="left:708px;top:202px;width:40px;height:50px;background:#EDD8F2"></div>
<div class="a" style="left:708px;top:202px;width:1px;height:50px;background:rgba(120,80,130,0.10)"></div>
<div class="t" style="left:708px;width:40px;text-align:center;top:215.06px;font-size:24.5px;color:#555">8</div>
<div class="a" style="left:828px;top:202px;width:10px;height:50px;background:#EDD8F2"></div>
<div class="a" style="left:838px;top:202px;width:30px;height:50px;background:#E2D8E4"></div>
<div class="a" style="left:828px;top:202px;width:1px;height:50px;background:rgba(120,80,130,0.10)"></div>
<div class="t" style="left:828px;width:40px;text-align:center;top:215.06px;font-size:24.5px;color:#555">6</div>
<div class="a" style="left:868px;top:202px;width:40px;height:50px;background:#E2D8E4"></div>
<div class="a" style="left:868px;top:202px;width:1px;height:50px;background:rgba(120,80,130,0.10)"></div>
<div class="t" style="left:868px;width:40px;text-align:center;top:215.06px;font-size:24.5px;color:#555">6</div>
<div class="a" style="left:908px;top:202px;width:40px;height:50px;background:#E2D8E4"></div>
<div class="a" style="left:908px;top:202px;width:1px;height:50px;background:rgba(120,80,130,0.10)"></div>
<div class="t" style="left:908px;width:40px;text-align:center;top:215.06px;font-size:24.5px;color:#555">6</div>
<div class="a" style="left:948px;top:202px;width:40px;height:50px;background:#E2D8E4"></div>
<div class="a" style="left:948px;top:202px;width:1px;height:50px;background:rgba(120,80,130,0.10)"></div>
<div class="t" style="left:948px;width:40px;text-align:center;top:215.06px;font-size:24.5px;color:#555">6</div>
<div class="a" style="left:988px;top:202px;width:40px;height:50px;background:#E2D8E4"></div>
<div class="a" style="left:988px;top:202px;width:1px;height:50px;background:rgba(120,80,130,0.10)"></div>
<div class="t" style="left:988px;width:40px;text-align:center;top:215.06px;font-size:24.5px;color:#555">6</div>
<div class="a" style="left:1108px;top:202px;width:40px;height:50px;background:#E2D8E4"></div>
<div class="a" style="left:1108px;top:202px;width:1px;height:50px;background:rgba(120,80,130,0.10)"></div>
<div class="t" style="left:1108px;width:40px;text-align:center;top:215.06px;font-size:24.5px;color:#555">6</div>
<div class="a" style="left:1148px;top:202px;width:40px;height:50px;background:#E2D8E4"></div>
<div class="a" style="left:1148px;top:202px;width:1px;height:50px;background:rgba(120,80,130,0.10)"></div>
<div class="t" style="left:1148px;width:40px;text-align:center;top:215.06px;font-size:24.5px;color:#555">6</div>
<div class="a" style="left:1188px;top:202px;width:40px;height:50px;background:#E2D8E4"></div>
<div class="a" style="left:1188px;top:202px;width:1px;height:50px;background:rgba(120,80,130,0.10)"></div>
<div class="t" style="left:1188px;width:40px;text-align:center;top:215.06px;font-size:24.5px;color:#555">6</div>
<div class="a" style="left:1228px;top:202px;width:40px;height:50px;background:#E2D8E4"></div>
<div class="a" style="left:1228px;top:202px;width:1px;height:50px;background:rgba(120,80,130,0.10)"></div>
<div class="t" style="left:1228px;width:40px;text-align:center;top:215.06px;font-size:24.5px;color:#555">6</div>
<div class="a" style="left:1268px;top:202px;width:40px;height:50px;background:#E2D8E4"></div>
<div class="a" style="left:1268px;top:202px;width:1px;height:50px;background:rgba(120,80,130,0.10)"></div>
<div class="t" style="left:1268px;width:40px;text-align:center;top:215.06px;font-size:24.5px;color:#555">6</div>
<div class="a" style="left:1388px;top:202px;width:40px;height:50px;background:#E2D8E4"></div>
<div class="a" style="left:1388px;top:202px;width:1px;height:50px;background:rgba(120,80,130,0.10)"></div>
<div class="t" style="left:1388px;width:40px;text-align:center;top:215.06px;font-size:24.5px;color:#555">6</div>
<div class="a" style="left:1428px;top:202px;width:40px;height:50px;background:#E2D8E4"></div>
<div class="a" style="left:1428px;top:202px;width:1px;height:50px;background:rgba(120,80,130,0.10)"></div>
<div class="t" style="left:1428px;width:40px;text-align:center;top:215.06px;font-size:24.5px;color:#555">6</div>
<div class="a" style="left:1468px;top:202px;width:40px;height:50px;background:#FFE8E8"></div>
<div class="a" style="left:1468px;top:202px;width:1px;height:50px;background:rgba(120,80,130,0.10)"></div>
<div class="t" style="left:1468px;width:40px;text-align:center;top:215.06px;font-size:24.5px;color:#555">2</div>
<div class="a" style="left:1508px;top:202px;width:40px;height:50px;background:#FFE8E8"></div>
<div class="a" style="left:1508px;top:202px;width:1px;height:50px;background:rgba(120,80,130,0.10)"></div>
<div class="t" style="left:1508px;width:40px;text-align:center;top:215.06px;font-size:24.5px;color:#555">2</div>
<div class="a" style="left:1548px;top:202px;width:40px;height:50px;background:#FFE8E8"></div>
<div class="a" style="left:1548px;top:202px;width:1px;height:50px;background:rgba(120,80,130,0.10)"></div>
<div class="t" style="left:1548px;width:40px;text-align:center;top:215.06px;font-size:24.5px;color:#555">2</div>
<div class="a" style="left:1668px;top:202px;width:40px;height:50px;background:#FFE8E8"></div>
<div class="a" style="left:1668px;top:202px;width:1px;height:50px;background:rgba(120,80,130,0.10)"></div>
<div class="t" style="left:1668px;width:40px;text-align:center;top:215.06px;font-size:24.5px;color:#555">2</div>
<div class="a" style="left:1708px;top:202px;width:40px;height:50px;background:#FFE8E8"></div>
<div class="a" style="left:1708px;top:202px;width:1px;height:50px;background:rgba(120,80,130,0.10)"></div>
<div class="t" style="left:1708px;width:40px;text-align:center;top:215.06px;font-size:24.5px;color:#555">2</div>
<div class="a" style="left:1748px;top:202px;width:40px;height:50px;background:#FFE8E8"></div>
<div class="a" style="left:1748px;top:202px;width:1px;height:50px;background:rgba(120,80,130,0.10)"></div>
<div class="t" style="left:1748px;width:40px;text-align:center;top:215.06px;font-size:24.5px;color:#555">2</div>
<div class="a" style="left:1788px;top:202px;width:40px;height:50px;background:#D4E8EE"></div>
<div class="a" style="left:1788px;top:202px;width:1px;height:50px;background:rgba(120,80,130,0.10)"></div>
<div class="t" style="left:1788px;width:40px;text-align:center;top:215.06px;font-size:24.5px;color:#555">8</div>
<div class="a" style="left:1828px;top:202px;width:40px;height:50px;background:#D4E8EE"></div>
<div class="a" style="left:1828px;top:202px;width:1px;height:50px;background:rgba(120,80,130,0.10)"></div>
<div class="t" style="left:1828px;width:40px;text-align:center;top:215.06px;font-size:24.5px;color:#555">8</div>
<div class="a" style="left:1948px;top:202px;width:40px;height:50px;background:#D4E8EE"></div>
<div class="a" style="left:1948px;top:202px;width:1px;height:50px;background:rgba(120,80,130,0.10)"></div>
<div class="t" style="left:1948px;width:40px;text-align:center;top:215.06px;font-size:24.5px;color:#555">8</div>
<div class="a" style="left:1988px;top:202px;width:40px;height:50px;background:#D4E8EE"></div>
<div class="a" style="left:1988px;top:202px;width:1px;height:50px;background:rgba(120,80,130,0.10)"></div>
<div class="t" style="left:1988px;width:40px;text-align:center;top:215.06px;font-size:24.5px;color:#555">8</div>
<div class="a" style="left:2028px;top:202px;width:40px;height:50px;background:#EDD8F2"></div>
<div class="a" style="left:2028px;top:202px;width:1px;height:50px;background:rgba(120,80,130,0.10)"></div>
<div class="t" style="left:2028px;width:40px;text-align:center;top:215.06px;font-size:24.5px;color:#555">4</div>
<div class="a" style="left:2068px;top:202px;width:40px;height:50px;background:#D4E8EE"></div>
<div class="a" style="left:2068px;top:202px;width:1px;height:50px;background:rgba(120,80,130,0.10)"></div>
<div class="t" style="left:2068px;width:40px;text-align:center;top:215.06px;font-size:24.5px;color:#555">8</div>
<div class="a" style="left:2108px;top:202px;width:40px;height:50px;background:#EDD8F2"></div>
<div class="a" style="left:2108px;top:202px;width:1px;height:50px;background:rgba(120,80,130,0.10)"></div>
<div class="t" style="left:2108px;width:40px;text-align:center;top:215.06px;font-size:24.5px;color:#555">4</div>
<div class="a" style="left:2228px;top:202px;width:40px;height:50px;background:#EDD8F2"></div>
<div class="a" style="left:2228px;top:202px;width:1px;height:50px;background:rgba(120,80,130,0.10)"></div>
<div class="t" style="left:2228px;width:40px;text-align:center;top:215.06px;font-size:24.5px;color:#555">4</div>
<div class="a" style="left:2268px;top:202px;width:40px;height:50px;background:#EDD8F2"></div>
<div class="a" style="left:2268px;top:202px;width:1px;height:50px;background:rgba(120,80,130,0.10)"></div>
<div class="t" style="left:2268px;width:40px;text-align:center;top:215.06px;font-size:24.5px;color:#555">4</div>
<div class="a" style="left:2308px;top:202px;width:40px;height:50px;background:#EDD8F2"></div>
<div class="a" style="left:2308px;top:202px;width:1px;height:50px;background:rgba(120,80,130,0.10)"></div>
<div class="t" style="left:2308px;width:40px;text-align:center;top:215.06px;font-size:24.5px;color:#555">4</div>
<div class="a" style="left:2348px;top:202px;width:40px;height:50px;background:#EDD8F2"></div>
<div class="a" style="left:2348px;top:202px;width:1px;height:50px;background:rgba(120,80,130,0.10)"></div>
<div class="t" style="left:2348px;width:40px;text-align:center;top:215.06px;font-size:24.5px;color:#555">4</div>
<div class="a" style="left:2388px;top:202px;width:40px;height:50px;background:#EDD8F2"></div>
<div class="a" style="left:2388px;top:202px;width:1px;height:50px;background:rgba(120,80,130,0.10)"></div>
<div class="t" style="left:2388px;width:40px;text-align:center;top:215.06px;font-size:24.5px;color:#555">4</div>
<div class="a" style="left:28px;top:302px;width:40px;height:50px;background:#EDD8F2"></div>
<div class="a" style="left:28px;top:302px;width:1px;height:50px;background:rgba(120,80,130,0.10)"></div>
<div class="t" style="left:28px;width:40px;text-align:center;top:315.06px;font-size:24.5px;color:#555">8</div>
<div class="a" style="left:68px;top:302px;width:40px;height:50px;background:#EDD8F2"></div>
<div class="a" style="left:68px;top:302px;width:1px;height:50px;background:rgba(120,80,130,0.10)"></div>
<div class="t" style="left:68px;width:40px;text-align:center;top:315.06px;font-size:24.5px;color:#555">8</div>
<div class="a" style="left:108px;top:302px;width:40px;height:50px;background:#EDD8F2"></div>
<div class="a" style="left:108px;top:302px;width:1px;height:50px;background:rgba(120,80,130,0.10)"></div>
<div class="t" style="left:108px;width:40px;text-align:center;top:315.06px;font-size:24.5px;color:#555">8</div>
<div class="a" style="left:148px;top:302px;width:40px;height:50px;background:#EDD8F2"></div>
<div class="a" style="left:148px;top:302px;width:1px;height:50px;background:rgba(120,80,130,0.10)"></div>
<div class="t" style="left:148px;width:40px;text-align:center;top:315.06px;font-size:24.5px;color:#555">8</div>
<div class="a" style="left:268px;top:302px;width:40px;height:50px;background:#EDD8F2"></div>
<div class="a" style="left:268px;top:302px;width:1px;height:50px;background:rgba(120,80,130,0.10)"></div>
<div class="t" style="left:268px;width:40px;text-align:center;top:315.06px;font-size:24.5px;color:#555">8</div>
<div class="a" style="left:308px;top:302px;width:40px;height:50px;background:#EDD8F2"></div>
<div class="a" style="left:308px;top:302px;width:1px;height:50px;background:rgba(120,80,130,0.10)"></div>
<div class="t" style="left:308px;width:40px;text-align:center;top:315.06px;font-size:24.5px;color:#555">8</div>
<div class="a" style="left:348px;top:302px;width:40px;height:50px;background:#EDD8F2"></div>
<div class="a" style="left:348px;top:302px;width:1px;height:50px;background:rgba(120,80,130,0.10)"></div>
<div class="t" style="left:348px;width:40px;text-align:center;top:315.06px;font-size:24.5px;color:#555">8</div>
<div class="a" style="left:388px;top:302px;width:40px;height:50px;background:#EDD8F2"></div>
<div class="a" style="left:388px;top:302px;width:1px;height:50px;background:rgba(120,80,130,0.10)"></div>
<div class="t" style="left:388px;width:40px;text-align:center;top:315.06px;font-size:24.5px;color:#555">8</div>
<div class="a" style="left:428px;top:302px;width:40px;height:50px;background:#EDD8F2"></div>
<div class="a" style="left:428px;top:302px;width:1px;height:50px;background:rgba(120,80,130,0.10)"></div>
<div class="t" style="left:428px;width:40px;text-align:center;top:315.06px;font-size:24.5px;color:#555">8</div>
<div class="a" style="left:548px;top:302px;width:40px;height:50px;background:#D6CBEE"></div>
<div class="a" style="left:548px;top:302px;width:1px;height:50px;background:rgba(120,80,130,0.10)"></div>
<div class="t" style="left:548px;width:40px;text-align:center;top:315.06px;font-size:24.5px;color:#555">8</div>
<div class="a" style="left:588px;top:302px;width:40px;height:50px;background:#EDD8F2"></div>
<div class="a" style="left:588px;top:302px;width:1px;height:50px;background:rgba(120,80,130,0.10)"></div>
<div class="t" style="left:588px;width:40px;text-align:center;top:315.06px;font-size:24.5px;color:#555">8</div>
<div class="a" style="left:628px;top:302px;width:40px;height:50px;background:#EDD8F2"></div>
<div class="a" style="left:628px;top:302px;width:1px;height:50px;background:rgba(120,80,130,0.10)"></div>
<div class="t" style="left:628px;width:40px;text-align:center;top:315.06px;font-size:24.5px;color:#555">8</div>
<div class="a" style="left:668px;top:302px;width:40px;height:50px;background:#EDD8F2"></div>
<div class="a" style="left:668px;top:302px;width:1px;height:50px;background:rgba(120,80,130,0.10)"></div>
<div class="t" style="left:668px;width:40px;text-align:center;top:315.06px;font-size:24.5px;color:#555">8</div>
<div class="a" style="left:708px;top:302px;width:40px;height:50px;background:#EDD8F2"></div>
<div class="a" style="left:708px;top:302px;width:1px;height:50px;background:rgba(120,80,130,0.10)"></div>
<div class="t" style="left:708px;width:40px;text-align:center;top:315.06px;font-size:24.5px;color:#555">8</div>
<div class="a" style="left:828px;top:302px;width:10px;height:50px;background:#EDD8F2"></div>
<div class="a" style="left:838px;top:302px;width:30px;height:50px;background:#E2D8E4"></div>
<div class="a" style="left:828px;top:302px;width:1px;height:50px;background:rgba(120,80,130,0.10)"></div>
<div class="t" style="left:828px;width:40px;text-align:center;top:315.06px;font-size:24.5px;color:#555">8</div>
<div class="a" style="left:868px;top:302px;width:40px;height:50px;background:#E2D8E4"></div>
<div class="a" style="left:868px;top:302px;width:1px;height:50px;background:rgba(120,80,130,0.10)"></div>
<div class="t" style="left:868px;width:40px;text-align:center;top:315.06px;font-size:24.5px;color:#555">8</div>
<div class="a" style="left:908px;top:302px;width:40px;height:50px;background:#E2D8E4"></div>
<div class="a" style="left:908px;top:302px;width:1px;height:50px;background:rgba(120,80,130,0.10)"></div>
<div class="t" style="left:908px;width:40px;text-align:center;top:315.06px;font-size:24.5px;color:#555">8</div>
<div class="a" style="left:948px;top:302px;width:40px;height:50px;background:#E2D8E4"></div>
<div class="a" style="left:948px;top:302px;width:1px;height:50px;background:rgba(120,80,130,0.10)"></div>
<div class="t" style="left:948px;width:40px;text-align:center;top:315.06px;font-size:24.5px;color:#555">8</div>
<div class="a" style="left:988px;top:302px;width:40px;height:50px;background:#E2D8E4"></div>
<div class="a" style="left:988px;top:302px;width:1px;height:50px;background:rgba(120,80,130,0.10)"></div>
<div class="t" style="left:988px;width:40px;text-align:center;top:315.06px;font-size:24.5px;color:#555">8</div>
<div class="a" style="left:1108px;top:302px;width:40px;height:50px;background:#E2D8E4"></div>
<div class="a" style="left:1108px;top:302px;width:1px;height:50px;background:rgba(120,80,130,0.10)"></div>
<div class="t" style="left:1108px;width:40px;text-align:center;top:315.06px;font-size:24.5px;color:#555">8</div>
<div class="a" style="left:1148px;top:302px;width:40px;height:50px;background:#E2D8E4"></div>
<div class="a" style="left:1148px;top:302px;width:1px;height:50px;background:rgba(120,80,130,0.10)"></div>
<div class="t" style="left:1148px;width:40px;text-align:center;top:315.06px;font-size:24.5px;color:#555">8</div>
<div class="a" style="left:1188px;top:302px;width:40px;height:50px;background:#E2D8E4"></div>
<div class="a" style="left:1188px;top:302px;width:1px;height:50px;background:rgba(120,80,130,0.10)"></div>
<div class="t" style="left:1188px;width:40px;text-align:center;top:315.06px;font-size:24.5px;color:#555">8</div>
<div class="a" style="left:1228px;top:302px;width:40px;height:50px;background:#E2D8E4"></div>
<div class="a" style="left:1228px;top:302px;width:1px;height:50px;background:rgba(120,80,130,0.10)"></div>
<div class="t" style="left:1228px;width:40px;text-align:center;top:315.06px;font-size:24.5px;color:#555">8</div>
<div class="a" style="left:1268px;top:302px;width:40px;height:50px;background:#E2D8E4"></div>
<div class="a" style="left:1268px;top:302px;width:1px;height:50px;background:rgba(120,80,130,0.10)"></div>
<div class="t" style="left:1268px;width:40px;text-align:center;top:315.06px;font-size:24.5px;color:#555">8</div>
<div class="a" style="left:1388px;top:302px;width:40px;height:50px;background:#E2D8E4"></div>
<div class="a" style="left:1388px;top:302px;width:1px;height:50px;background:rgba(120,80,130,0.10)"></div>
<div class="t" style="left:1388px;width:40px;text-align:center;top:315.06px;font-size:24.5px;color:#555">8</div>
<div class="a" style="left:1428px;top:302px;width:40px;height:50px;background:#E2D8E4"></div>
<div class="a" style="left:1428px;top:302px;width:1px;height:50px;background:rgba(120,80,130,0.10)"></div>
<div class="t" style="left:1428px;width:40px;text-align:center;top:315.06px;font-size:24.5px;color:#555">8</div>
<div class="a" style="left:1468px;top:302px;width:40px;height:50px;background:#FFE8E8"></div>
<div class="a" style="left:1468px;top:302px;width:1px;height:50px;background:rgba(120,80,130,0.10)"></div>
<div class="t" style="left:1468px;width:40px;text-align:center;top:315.06px;font-size:24.5px;color:#555">8</div>
<div class="a" style="left:1508px;top:302px;width:40px;height:50px;background:#FFE8E8"></div>
<div class="a" style="left:1508px;top:302px;width:1px;height:50px;background:rgba(120,80,130,0.10)"></div>
<div class="t" style="left:1508px;width:40px;text-align:center;top:315.06px;font-size:24.5px;color:#555">8</div>
<div class="a" style="left:1548px;top:302px;width:40px;height:50px;background:#FFE8E8"></div>
<div class="a" style="left:1548px;top:302px;width:1px;height:50px;background:rgba(120,80,130,0.10)"></div>
<div class="t" style="left:1548px;width:40px;text-align:center;top:315.06px;font-size:24.5px;color:#555">8</div>
<div class="a" style="left:1668px;top:302px;width:40px;height:50px;background:#FFE8E8"></div>
<div class="a" style="left:1668px;top:302px;width:1px;height:50px;background:rgba(120,80,130,0.10)"></div>
<div class="t" style="left:1668px;width:40px;text-align:center;top:315.06px;font-size:24.5px;color:#555">8</div>
<div class="a" style="left:1708px;top:302px;width:40px;height:50px;background:#FFE8E8"></div>
<div class="a" style="left:1708px;top:302px;width:1px;height:50px;background:rgba(120,80,130,0.10)"></div>
<div class="t" style="left:1708px;width:40px;text-align:center;top:315.06px;font-size:24.5px;color:#555">8</div>
<div class="a" style="left:1748px;top:302px;width:40px;height:50px;background:#FFE8E8"></div>
<div class="a" style="left:1748px;top:302px;width:1px;height:50px;background:rgba(120,80,130,0.10)"></div>
<div class="t" style="left:1748px;width:40px;text-align:center;top:315.06px;font-size:24.5px;color:#555">8</div>
<div class="a" style="left:1788px;top:302px;width:40px;height:50px;background:#EDD8F2"></div>
<div class="a" style="left:1788px;top:302px;width:1px;height:50px;background:rgba(120,80,130,0.10)"></div>
<div class="t" style="left:1788px;width:40px;text-align:center;top:315.06px;font-size:24.5px;color:#555">8</div>
<div class="a" style="left:1828px;top:302px;width:40px;height:50px;background:#EDD8F2"></div>
<div class="a" style="left:1828px;top:302px;width:1px;height:50px;background:rgba(120,80,130,0.10)"></div>
<div class="t" style="left:1828px;width:40px;text-align:center;top:315.06px;font-size:24.5px;color:#555">8</div>
<div class="a" style="left:1948px;top:302px;width:40px;height:50px;background:#EDD8F2"></div>
<div class="a" style="left:1948px;top:302px;width:1px;height:50px;background:rgba(120,80,130,0.10)"></div>
<div class="t" style="left:1948px;width:40px;text-align:center;top:315.06px;font-size:24.5px;color:#555">8</div>
<div class="a" style="left:1988px;top:302px;width:40px;height:50px;background:#EDD8F2"></div>
<div class="a" style="left:1988px;top:302px;width:1px;height:50px;background:rgba(120,80,130,0.10)"></div>
<div class="t" style="left:1988px;width:40px;text-align:center;top:315.06px;font-size:24.5px;color:#555">8</div>
<div class="a" style="left:2028px;top:302px;width:40px;height:50px;background:#EDD8F2"></div>
<div class="a" style="left:2028px;top:302px;width:1px;height:50px;background:rgba(120,80,130,0.10)"></div>
<div class="t" style="left:2028px;width:40px;text-align:center;top:315.06px;font-size:24.5px;color:#555">8</div>
<div class="a" style="left:2068px;top:302px;width:40px;height:50px;background:#EDD8F2"></div>
<div class="a" style="left:2068px;top:302px;width:1px;height:50px;background:rgba(120,80,130,0.10)"></div>
<div class="t" style="left:2068px;width:40px;text-align:center;top:315.06px;font-size:24.5px;color:#555">8</div>
<div class="a" style="left:2108px;top:302px;width:40px;height:50px;background:#EDD8F2"></div>
<div class="a" style="left:2108px;top:302px;width:1px;height:50px;background:rgba(120,80,130,0.10)"></div>
<div class="t" style="left:2108px;width:40px;text-align:center;top:315.06px;font-size:24.5px;color:#555">8</div>
<div class="a" style="left:2228px;top:302px;width:40px;height:50px;background:#EDD8F2"></div>
<div class="a" style="left:2228px;top:302px;width:1px;height:50px;background:rgba(120,80,130,0.10)"></div>
<div class="t" style="left:2228px;width:40px;text-align:center;top:315.06px;font-size:24.5px;color:#555">6</div>
<div class="a" style="left:2268px;top:302px;width:40px;height:50px;background:#EDD8F2"></div>
<div class="a" style="left:2268px;top:302px;width:1px;height:50px;background:rgba(120,80,130,0.10)"></div>
<div class="t" style="left:2268px;width:40px;text-align:center;top:315.06px;font-size:24.5px;color:#555">6</div>
<div class="a" style="left:2308px;top:302px;width:40px;height:50px;background:#EDD8F2"></div>
<div class="a" style="left:2308px;top:302px;width:1px;height:50px;background:rgba(120,80,130,0.10)"></div>
<div class="t" style="left:2308px;width:40px;text-align:center;top:315.06px;font-size:24.5px;color:#555">6</div>
<div class="a" style="left:2348px;top:302px;width:40px;height:50px;background:#EDD8F2"></div>
<div class="a" style="left:2348px;top:302px;width:1px;height:50px;background:rgba(120,80,130,0.10)"></div>
<div class="t" style="left:2348px;width:40px;text-align:center;top:315.06px;font-size:24.5px;color:#555">6</div>
<div class="a" style="left:2388px;top:302px;width:40px;height:50px;background:#EDD8F2"></div>
<div class="a" style="left:2388px;top:302px;width:1px;height:50px;background:rgba(120,80,130,0.10)"></div>
<div class="t" style="left:2388px;width:40px;text-align:center;top:315.06px;font-size:24.5px;color:#555">6</div>
<div class="a" style="left:28px;top:402px;width:40px;height:50px;background:#EDD8F2"></div>
<div class="a" style="left:28px;top:402px;width:1px;height:50px;background:rgba(120,80,130,0.10)"></div>
<div class="t" style="left:28px;width:40px;text-align:center;top:415.06px;font-size:24.5px;color:#555">8</div>
<div class="a" style="left:68px;top:402px;width:40px;height:50px;background:#EDD8F2"></div>
<div class="a" style="left:68px;top:402px;width:1px;height:50px;background:rgba(120,80,130,0.10)"></div>
<div class="t" style="left:68px;width:40px;text-align:center;top:415.06px;font-size:24.5px;color:#555">8</div>
<div class="a" style="left:108px;top:402px;width:40px;height:50px;background:#EDD8F2"></div>
<div class="a" style="left:108px;top:402px;width:1px;height:50px;background:rgba(120,80,130,0.10)"></div>
<div class="t" style="left:108px;width:40px;text-align:center;top:415.06px;font-size:24.5px;color:#555">8</div>
<div class="a" style="left:148px;top:402px;width:40px;height:50px;background:#EDD8F2"></div>
<div class="a" style="left:148px;top:402px;width:1px;height:50px;background:rgba(120,80,130,0.10)"></div>
<div class="t" style="left:148px;width:40px;text-align:center;top:415.06px;font-size:24.5px;color:#555">8</div>
<div class="a" style="left:268px;top:402px;width:40px;height:50px;background:#EDD8F2"></div>
<div class="a" style="left:268px;top:402px;width:1px;height:50px;background:rgba(120,80,130,0.10)"></div>
<div class="t" style="left:268px;width:40px;text-align:center;top:415.06px;font-size:24.5px;color:#555">8</div>
<div class="a" style="left:308px;top:402px;width:40px;height:50px;background:#EDD8F2"></div>
<div class="a" style="left:308px;top:402px;width:1px;height:50px;background:rgba(120,80,130,0.10)"></div>
<div class="t" style="left:308px;width:40px;text-align:center;top:415.06px;font-size:24.5px;color:#555">8</div>
<div class="a" style="left:348px;top:402px;width:40px;height:50px;background:#EDD8F2"></div>
<div class="a" style="left:348px;top:402px;width:1px;height:50px;background:rgba(120,80,130,0.10)"></div>
<div class="t" style="left:348px;width:40px;text-align:center;top:415.06px;font-size:24.5px;color:#555">8</div>
<div class="a" style="left:388px;top:402px;width:40px;height:50px;background:#EDD8F2"></div>
<div class="a" style="left:388px;top:402px;width:1px;height:50px;background:rgba(120,80,130,0.10)"></div>
<div class="t" style="left:388px;width:40px;text-align:center;top:415.06px;font-size:24.5px;color:#555">8</div>
<div class="a" style="left:428px;top:402px;width:40px;height:50px;background:#EDD8F2"></div>
<div class="a" style="left:428px;top:402px;width:1px;height:50px;background:rgba(120,80,130,0.10)"></div>
<div class="t" style="left:428px;width:40px;text-align:center;top:415.06px;font-size:24.5px;color:#555">8</div>
<div class="a" style="left:548px;top:402px;width:40px;height:50px;background:#D6CBEE"></div>
<div class="a" style="left:548px;top:402px;width:1px;height:50px;background:rgba(120,80,130,0.10)"></div>
<div class="t" style="left:548px;width:40px;text-align:center;top:415.06px;font-size:24.5px;color:#555">8</div>
<div class="a" style="left:588px;top:402px;width:40px;height:50px;background:#EDD8F2"></div>
<div class="a" style="left:588px;top:402px;width:1px;height:50px;background:rgba(120,80,130,0.10)"></div>
<div class="t" style="left:588px;width:40px;text-align:center;top:415.06px;font-size:24.5px;color:#555">8</div>
<div class="a" style="left:628px;top:402px;width:40px;height:50px;background:#EDD8F2"></div>
<div class="a" style="left:628px;top:402px;width:1px;height:50px;background:rgba(120,80,130,0.10)"></div>
<div class="t" style="left:628px;width:40px;text-align:center;top:415.06px;font-size:24.5px;color:#555">8</div>
<div class="a" style="left:668px;top:402px;width:40px;height:50px;background:#EDD8F2"></div>
<div class="a" style="left:668px;top:402px;width:1px;height:50px;background:rgba(120,80,130,0.10)"></div>
<div class="t" style="left:668px;width:40px;text-align:center;top:415.06px;font-size:24.5px;color:#555">8</div>
<div class="a" style="left:708px;top:402px;width:40px;height:50px;background:#EDD8F2"></div>
<div class="a" style="left:708px;top:402px;width:1px;height:50px;background:rgba(120,80,130,0.10)"></div>
<div class="t" style="left:708px;width:40px;text-align:center;top:415.06px;font-size:24.5px;color:#555">8</div>
<div class="a" style="left:828px;top:402px;width:10px;height:50px;background:#EDD8F2"></div>
<div class="a" style="left:838px;top:402px;width:30px;height:50px;background:#E2D8E4"></div>
<div class="a" style="left:828px;top:402px;width:1px;height:50px;background:rgba(120,80,130,0.10)"></div>
<div class="t" style="left:828px;width:40px;text-align:center;top:415.06px;font-size:24.5px;color:#555">8</div>
<div class="a" style="left:868px;top:402px;width:40px;height:50px;background:#E2D8E4"></div>
<div class="a" style="left:868px;top:402px;width:1px;height:50px;background:rgba(120,80,130,0.10)"></div>
<div class="t" style="left:868px;width:40px;text-align:center;top:415.06px;font-size:24.5px;color:#555">8</div>
<div class="a" style="left:908px;top:402px;width:40px;height:50px;background:#E2D8E4"></div>
<div class="a" style="left:908px;top:402px;width:1px;height:50px;background:rgba(120,80,130,0.10)"></div>
<div class="t" style="left:908px;width:40px;text-align:center;top:415.06px;font-size:24.5px;color:#555">8</div>
<div class="a" style="left:948px;top:402px;width:40px;height:50px;background:#E2D8E4"></div>
<div class="a" style="left:948px;top:402px;width:1px;height:50px;background:rgba(120,80,130,0.10)"></div>
<div class="t" style="left:948px;width:40px;text-align:center;top:415.06px;font-size:24.5px;color:#555">8</div>
<div class="a" style="left:988px;top:402px;width:40px;height:50px;background:#E2D8E4"></div>
<div class="a" style="left:988px;top:402px;width:1px;height:50px;background:rgba(120,80,130,0.10)"></div>
<div class="t" style="left:988px;width:40px;text-align:center;top:415.06px;font-size:24.5px;color:#555">8</div>
<div class="a" style="left:1108px;top:402px;width:40px;height:50px;background:#E2D8E4"></div>
<div class="a" style="left:1108px;top:402px;width:1px;height:50px;background:rgba(120,80,130,0.10)"></div>
<div class="t" style="left:1108px;width:40px;text-align:center;top:415.06px;font-size:24.5px;color:#555">8</div>
<div class="a" style="left:1148px;top:402px;width:40px;height:50px;background:#E2D8E4"></div>
<div class="a" style="left:1148px;top:402px;width:1px;height:50px;background:rgba(120,80,130,0.10)"></div>
<div class="t" style="left:1148px;width:40px;text-align:center;top:415.06px;font-size:24.5px;color:#555">8</div>
<div class="a" style="left:1188px;top:402px;width:40px;height:50px;background:#E2D8E4"></div>
<div class="a" style="left:1188px;top:402px;width:1px;height:50px;background:rgba(120,80,130,0.10)"></div>
<div class="t" style="left:1188px;width:40px;text-align:center;top:415.06px;font-size:24.5px;color:#555">8</div>
<div class="a" style="left:1228px;top:402px;width:40px;height:50px;background:#E2D8E4"></div>
<div class="a" style="left:1228px;top:402px;width:1px;height:50px;background:rgba(120,80,130,0.10)"></div>
<div class="t" style="left:1228px;width:40px;text-align:center;top:415.06px;font-size:24.5px;color:#555">8</div>
<div class="a" style="left:1268px;top:402px;width:40px;height:50px;background:#E2D8E4"></div>
<div class="a" style="left:1268px;top:402px;width:1px;height:50px;background:rgba(120,80,130,0.10)"></div>
<div class="t" style="left:1268px;width:40px;text-align:center;top:415.06px;font-size:24.5px;color:#555">8</div>
<div class="a" style="left:1388px;top:402px;width:40px;height:50px;background:#E2D8E4"></div>
<div class="a" style="left:1388px;top:402px;width:1px;height:50px;background:rgba(120,80,130,0.10)"></div>
<div class="t" style="left:1388px;width:40px;text-align:center;top:415.06px;font-size:24.5px;color:#555">8</div>
<div class="a" style="left:1428px;top:402px;width:40px;height:50px;background:#E2D8E4"></div>
<div class="a" style="left:1428px;top:402px;width:1px;height:50px;background:rgba(120,80,130,0.10)"></div>
<div class="t" style="left:1428px;width:40px;text-align:center;top:415.06px;font-size:24.5px;color:#555">8</div>
<div class="a" style="left:1468px;top:402px;width:40px;height:50px;background:#FFE8E8"></div>
<div class="a" style="left:1468px;top:402px;width:1px;height:50px;background:rgba(120,80,130,0.10)"></div>
<div class="t" style="left:1468px;width:40px;text-align:center;top:415.06px;font-size:24.5px;color:#555">8</div>
<div class="a" style="left:1508px;top:402px;width:40px;height:50px;background:#FFE8E8"></div>
<div class="a" style="left:1508px;top:402px;width:1px;height:50px;background:rgba(120,80,130,0.10)"></div>
<div class="t" style="left:1508px;width:40px;text-align:center;top:415.06px;font-size:24.5px;color:#555">8</div>
<div class="a" style="left:1548px;top:402px;width:40px;height:50px;background:#FFE8E8"></div>
<div class="a" style="left:1548px;top:402px;width:1px;height:50px;background:rgba(120,80,130,0.10)"></div>
<div class="t" style="left:1548px;width:40px;text-align:center;top:415.06px;font-size:24.5px;color:#555">8</div>
<div class="a" style="left:1668px;top:402px;width:40px;height:50px;background:#FFE8E8"></div>
<div class="a" style="left:1668px;top:402px;width:1px;height:50px;background:rgba(120,80,130,0.10)"></div>
<div class="t" style="left:1668px;width:40px;text-align:center;top:415.06px;font-size:24.5px;color:#555">8</div>
<div class="a" style="left:1708px;top:402px;width:40px;height:50px;background:#FFE8E8"></div>
<div class="a" style="left:1708px;top:402px;width:1px;height:50px;background:rgba(120,80,130,0.10)"></div>
<div class="t" style="left:1708px;width:40px;text-align:center;top:415.06px;font-size:24.5px;color:#555">8</div>
<div class="a" style="left:1748px;top:402px;width:40px;height:50px;background:#FFE8E8"></div>
<div class="a" style="left:1748px;top:402px;width:1px;height:50px;background:rgba(120,80,130,0.10)"></div>
<div class="t" style="left:1748px;width:40px;text-align:center;top:415.06px;font-size:24.5px;color:#555">8</div>
<div class="a" style="left:1788px;top:402px;width:40px;height:50px;background:#FFE8E8"></div>
<div class="a" style="left:1788px;top:402px;width:1px;height:50px;background:rgba(120,80,130,0.10)"></div>
<div class="t" style="left:1788px;width:40px;text-align:center;top:415.06px;font-size:24.5px;color:#555">8</div>
<div class="a" style="left:1828px;top:402px;width:40px;height:50px;background:#FFE8E8"></div>
<div class="a" style="left:1828px;top:402px;width:1px;height:50px;background:rgba(120,80,130,0.10)"></div>
<div class="t" style="left:1828px;width:40px;text-align:center;top:415.06px;font-size:24.5px;color:#555">8</div>
<div class="a" style="left:1948px;top:402px;width:40px;height:50px;background:#FFE8E8"></div>
<div class="a" style="left:1948px;top:402px;width:1px;height:50px;background:rgba(120,80,130,0.10)"></div>
<div class="t" style="left:1948px;width:40px;text-align:center;top:415.06px;font-size:24.5px;color:#555">8</div>
<div class="a" style="left:1988px;top:402px;width:40px;height:50px;background:#FFE8E8"></div>
<div class="a" style="left:1988px;top:402px;width:1px;height:50px;background:rgba(120,80,130,0.10)"></div>
<div class="t" style="left:1988px;width:40px;text-align:center;top:415.06px;font-size:24.5px;color:#555">8</div>
<div class="a" style="left:2028px;top:402px;width:40px;height:50px;background:#FFE8E8"></div>
<div class="a" style="left:2028px;top:402px;width:1px;height:50px;background:rgba(120,80,130,0.10)"></div>
<div class="t" style="left:2028px;width:40px;text-align:center;top:415.06px;font-size:24.5px;color:#555">8</div>
<div class="a" style="left:2068px;top:402px;width:40px;height:50px;background:#FFE8E8"></div>
<div class="a" style="left:2068px;top:402px;width:1px;height:50px;background:rgba(120,80,130,0.10)"></div>
<div class="t" style="left:2068px;width:40px;text-align:center;top:415.06px;font-size:24.5px;color:#555">8</div>
<div class="a" style="left:2108px;top:402px;width:40px;height:50px;background:#FFE8E8"></div>
<div class="a" style="left:2108px;top:402px;width:1px;height:50px;background:rgba(120,80,130,0.10)"></div>
<div class="t" style="left:2108px;width:40px;text-align:center;top:415.06px;font-size:24.5px;color:#555">8</div>
<div class="a" style="left:2228px;top:402px;width:40px;height:50px;background:#FFE8E8"></div>
<div class="a" style="left:2228px;top:402px;width:1px;height:50px;background:rgba(120,80,130,0.10)"></div>
<div class="t" style="left:2228px;width:40px;text-align:center;top:415.06px;font-size:24.5px;color:#555">4</div>
<div class="a" style="left:2268px;top:402px;width:40px;height:50px;background:#FFE8E8"></div>
<div class="a" style="left:2268px;top:402px;width:1px;height:50px;background:rgba(120,80,130,0.10)"></div>
<div class="t" style="left:2268px;width:40px;text-align:center;top:415.06px;font-size:24.5px;color:#555">2</div>
<div class="a" style="left:2348px;top:402px;width:40px;height:50px;background:#FFE8E8"></div>
<div class="a" style="left:2348px;top:402px;width:1px;height:50px;background:rgba(120,80,130,0.10)"></div>
<div class="t" style="left:2348px;width:40px;text-align:center;top:415.06px;font-size:24.5px;color:#555">2</div>
<div class="a" style="left:2388px;top:402px;width:40px;height:50px;background:#FFE8E8"></div>
<div class="a" style="left:2388px;top:402px;width:1px;height:50px;background:rgba(120,80,130,0.10)"></div>
<div class="t" style="left:2388px;width:40px;text-align:center;top:415.06px;font-size:24.5px;color:#555">2</div>
<div class="a" style="left:28px;top:502px;width:40px;height:50px;background:#EDD8F2"></div>
<div class="a" style="left:28px;top:502px;width:1px;height:50px;background:rgba(120,80,130,0.10)"></div>
<div class="t" style="left:28px;width:40px;text-align:center;top:515.06px;font-size:24.5px;color:#555">8</div>
<div class="a" style="left:68px;top:502px;width:40px;height:50px;background:#EDD8F2"></div>
<div class="a" style="left:68px;top:502px;width:1px;height:50px;background:rgba(120,80,130,0.10)"></div>
<div class="t" style="left:68px;width:40px;text-align:center;top:515.06px;font-size:24.5px;color:#555">8</div>
<div class="a" style="left:108px;top:502px;width:40px;height:50px;background:#EDD8F2"></div>
<div class="a" style="left:108px;top:502px;width:1px;height:50px;background:rgba(120,80,130,0.10)"></div>
<div class="t" style="left:108px;width:40px;text-align:center;top:515.06px;font-size:24.5px;color:#555">8</div>
<div class="a" style="left:148px;top:502px;width:40px;height:50px;background:#EDD8F2"></div>
<div class="a" style="left:148px;top:502px;width:1px;height:50px;background:rgba(120,80,130,0.10)"></div>
<div class="t" style="left:148px;width:40px;text-align:center;top:515.06px;font-size:24.5px;color:#555">8</div>
<div class="a" style="left:268px;top:502px;width:40px;height:50px;background:#EDD8F2"></div>
<div class="a" style="left:268px;top:502px;width:1px;height:50px;background:rgba(120,80,130,0.10)"></div>
<div class="t" style="left:268px;width:40px;text-align:center;top:515.06px;font-size:24.5px;color:#555">8</div>
<div class="a" style="left:308px;top:502px;width:40px;height:50px;background:#EDD8F2"></div>
<div class="a" style="left:308px;top:502px;width:1px;height:50px;background:rgba(120,80,130,0.10)"></div>
<div class="t" style="left:308px;width:40px;text-align:center;top:515.06px;font-size:24.5px;color:#555">8</div>
<div class="a" style="left:348px;top:502px;width:40px;height:50px;background:#EDD8F2"></div>
<div class="a" style="left:348px;top:502px;width:1px;height:50px;background:rgba(120,80,130,0.10)"></div>
<div class="t" style="left:348px;width:40px;text-align:center;top:515.06px;font-size:24.5px;color:#555">8</div>
<div class="a" style="left:388px;top:502px;width:40px;height:50px;background:#EDD8F2"></div>
<div class="a" style="left:388px;top:502px;width:1px;height:50px;background:rgba(120,80,130,0.10)"></div>
<div class="t" style="left:388px;width:40px;text-align:center;top:515.06px;font-size:24.5px;color:#555">8</div>
<div class="a" style="left:428px;top:502px;width:40px;height:50px;background:#EDD8F2"></div>
<div class="a" style="left:428px;top:502px;width:1px;height:50px;background:rgba(120,80,130,0.10)"></div>
<div class="t" style="left:428px;width:40px;text-align:center;top:515.06px;font-size:24.5px;color:#555">8</div>
<div class="a" style="left:548px;top:502px;width:40px;height:50px;background:#D6CBEE"></div>
<div class="a" style="left:548px;top:502px;width:1px;height:50px;background:rgba(120,80,130,0.10)"></div>
<div class="t" style="left:548px;width:40px;text-align:center;top:515.06px;font-size:24.5px;color:#555">8</div>
<div class="a" style="left:588px;top:502px;width:40px;height:50px;background:#EDD8F2"></div>
<div class="a" style="left:588px;top:502px;width:1px;height:50px;background:rgba(120,80,130,0.10)"></div>
<div class="t" style="left:588px;width:40px;text-align:center;top:515.06px;font-size:24.5px;color:#555">8</div>
<div class="a" style="left:628px;top:502px;width:40px;height:50px;background:#EDD8F2"></div>
<div class="a" style="left:628px;top:502px;width:1px;height:50px;background:rgba(120,80,130,0.10)"></div>
<div class="t" style="left:628px;width:40px;text-align:center;top:515.06px;font-size:24.5px;color:#555">8</div>
<div class="a" style="left:668px;top:502px;width:40px;height:50px;background:#EDD8F2"></div>
<div class="a" style="left:668px;top:502px;width:1px;height:50px;background:rgba(120,80,130,0.10)"></div>
<div class="t" style="left:668px;width:40px;text-align:center;top:515.06px;font-size:24.5px;color:#555">8</div>
<div class="a" style="left:708px;top:502px;width:40px;height:50px;background:#EDD8F2"></div>
<div class="a" style="left:708px;top:502px;width:1px;height:50px;background:rgba(120,80,130,0.10)"></div>
<div class="t" style="left:708px;width:40px;text-align:center;top:515.06px;font-size:24.5px;color:#555">8</div>
<div class="a" style="left:828px;top:502px;width:10px;height:50px;background:#EDD8F2"></div>
<div class="a" style="left:838px;top:502px;width:30px;height:50px;background:#E2D8E4"></div>
<div class="a" style="left:828px;top:502px;width:1px;height:50px;background:rgba(120,80,130,0.10)"></div>
<div class="t" style="left:828px;width:40px;text-align:center;top:515.06px;font-size:24.5px;color:#555">8</div>
<div class="a" style="left:868px;top:502px;width:40px;height:50px;background:#E2D8E4"></div>
<div class="a" style="left:868px;top:502px;width:1px;height:50px;background:rgba(120,80,130,0.10)"></div>
<div class="t" style="left:868px;width:40px;text-align:center;top:515.06px;font-size:24.5px;color:#555">8</div>
<div class="a" style="left:908px;top:502px;width:40px;height:50px;background:#E2D8E4"></div>
<div class="a" style="left:908px;top:502px;width:1px;height:50px;background:rgba(120,80,130,0.10)"></div>
<div class="t" style="left:908px;width:40px;text-align:center;top:515.06px;font-size:24.5px;color:#555">8</div>
<div class="a" style="left:948px;top:502px;width:40px;height:50px;background:#E2D8E4"></div>
<div class="a" style="left:948px;top:502px;width:1px;height:50px;background:rgba(120,80,130,0.10)"></div>
<div class="t" style="left:948px;width:40px;text-align:center;top:515.06px;font-size:24.5px;color:#555">8</div>
<div class="a" style="left:988px;top:502px;width:40px;height:50px;background:#E2D8E4"></div>
<div class="a" style="left:988px;top:502px;width:1px;height:50px;background:rgba(120,80,130,0.10)"></div>
<div class="t" style="left:988px;width:40px;text-align:center;top:515.06px;font-size:24.5px;color:#555">8</div>
<div class="a" style="left:1108px;top:502px;width:40px;height:50px;background:#E2D8E4"></div>
<div class="a" style="left:1108px;top:502px;width:1px;height:50px;background:rgba(120,80,130,0.10)"></div>
<div class="t" style="left:1108px;width:40px;text-align:center;top:515.06px;font-size:24.5px;color:#555">8</div>
<div class="a" style="left:1148px;top:502px;width:40px;height:50px;background:#E2D8E4"></div>
<div class="a" style="left:1148px;top:502px;width:1px;height:50px;background:rgba(120,80,130,0.10)"></div>
<div class="t" style="left:1148px;width:40px;text-align:center;top:515.06px;font-size:24.5px;color:#555">8</div>
<div class="a" style="left:1188px;top:502px;width:40px;height:50px;background:#E2D8E4"></div>
<div class="a" style="left:1188px;top:502px;width:1px;height:50px;background:rgba(120,80,130,0.10)"></div>
<div class="t" style="left:1188px;width:40px;text-align:center;top:515.06px;font-size:24.5px;color:#555">8</div>
<div class="a" style="left:1228px;top:502px;width:40px;height:50px;background:#E2D8E4"></div>
<div class="a" style="left:1228px;top:502px;width:1px;height:50px;background:rgba(120,80,130,0.10)"></div>
<div class="t" style="left:1228px;width:40px;text-align:center;top:515.06px;font-size:24.5px;color:#555">8</div>
<div class="a" style="left:1268px;top:502px;width:40px;height:50px;background:#E2D8E4"></div>
<div class="a" style="left:1268px;top:502px;width:1px;height:50px;background:rgba(120,80,130,0.10)"></div>
<div class="t" style="left:1268px;width:40px;text-align:center;top:515.06px;font-size:24.5px;color:#555">8</div>
<div class="a" style="left:1388px;top:502px;width:40px;height:50px;background:#E2D8E4"></div>
<div class="a" style="left:1388px;top:502px;width:1px;height:50px;background:rgba(120,80,130,0.10)"></div>
<div class="t" style="left:1388px;width:40px;text-align:center;top:515.06px;font-size:24.5px;color:#555">8</div>
<div class="a" style="left:1428px;top:502px;width:40px;height:50px;background:#E2D8E4"></div>
<div class="a" style="left:1428px;top:502px;width:1px;height:50px;background:rgba(120,80,130,0.10)"></div>
<div class="t" style="left:1428px;width:40px;text-align:center;top:515.06px;font-size:24.5px;color:#555">8</div>
<div class="a" style="left:1468px;top:502px;width:40px;height:50px;background:#FFE8E8"></div>
<div class="a" style="left:1468px;top:502px;width:1px;height:50px;background:rgba(120,80,130,0.10)"></div>
<div class="t" style="left:1468px;width:40px;text-align:center;top:515.06px;font-size:24.5px;color:#555">8</div>
<div class="a" style="left:1508px;top:502px;width:40px;height:50px;background:#FFE8E8"></div>
<div class="a" style="left:1508px;top:502px;width:1px;height:50px;background:rgba(120,80,130,0.10)"></div>
<div class="t" style="left:1508px;width:40px;text-align:center;top:515.06px;font-size:24.5px;color:#555">8</div>
<div class="a" style="left:1548px;top:502px;width:40px;height:50px;background:#FFE8E8"></div>
<div class="a" style="left:1548px;top:502px;width:1px;height:50px;background:rgba(120,80,130,0.10)"></div>
<div class="t" style="left:1548px;width:40px;text-align:center;top:515.06px;font-size:24.5px;color:#555">8</div>
<div class="a" style="left:1668px;top:502px;width:40px;height:50px;background:#FFE8E8"></div>
<div class="a" style="left:1668px;top:502px;width:1px;height:50px;background:rgba(120,80,130,0.10)"></div>
<div class="t" style="left:1668px;width:40px;text-align:center;top:515.06px;font-size:24.5px;color:#555">8</div>
<div class="a" style="left:1708px;top:502px;width:40px;height:50px;background:#FFE8E8"></div>
<div class="a" style="left:1708px;top:502px;width:1px;height:50px;background:rgba(120,80,130,0.10)"></div>
<div class="t" style="left:1708px;width:40px;text-align:center;top:515.06px;font-size:24.5px;color:#555">8</div>
<div class="a" style="left:1748px;top:502px;width:40px;height:50px;background:#FFE8E8"></div>
<div class="a" style="left:1748px;top:502px;width:1px;height:50px;background:rgba(120,80,130,0.10)"></div>
<div class="t" style="left:1748px;width:40px;text-align:center;top:515.06px;font-size:24.5px;color:#555">8</div>
<div class="a" style="left:1788px;top:502px;width:40px;height:50px;background:#FFE8E8"></div>
<div class="a" style="left:1788px;top:502px;width:1px;height:50px;background:rgba(120,80,130,0.10)"></div>
<div class="t" style="left:1788px;width:40px;text-align:center;top:515.06px;font-size:24.5px;color:#555">8</div>
<div class="a" style="left:1828px;top:502px;width:40px;height:50px;background:#FFE8E8"></div>
<div class="a" style="left:1828px;top:502px;width:1px;height:50px;background:rgba(120,80,130,0.10)"></div>
<div class="t" style="left:1828px;width:40px;text-align:center;top:515.06px;font-size:24.5px;color:#555">8</div>
<div class="a" style="left:1948px;top:502px;width:40px;height:50px;background:#FFE8E8"></div>
<div class="a" style="left:1948px;top:502px;width:1px;height:50px;background:rgba(120,80,130,0.10)"></div>
<div class="t" style="left:1948px;width:40px;text-align:center;top:515.06px;font-size:24.5px;color:#555">8</div>
<div class="a" style="left:1988px;top:502px;width:40px;height:50px;background:#FFE8E8"></div>
<div class="a" style="left:1988px;top:502px;width:1px;height:50px;background:rgba(120,80,130,0.10)"></div>
<div class="t" style="left:1988px;width:40px;text-align:center;top:515.06px;font-size:24.5px;color:#555">8</div>
<div class="a" style="left:2028px;top:502px;width:40px;height:50px;background:#FFE8E8"></div>
<div class="a" style="left:2028px;top:502px;width:1px;height:50px;background:rgba(120,80,130,0.10)"></div>
<div class="t" style="left:2028px;width:40px;text-align:center;top:515.06px;font-size:24.5px;color:#555">8</div>
<div class="a" style="left:2068px;top:502px;width:40px;height:50px;background:#FFE8E8"></div>
<div class="a" style="left:2068px;top:502px;width:1px;height:50px;background:rgba(120,80,130,0.10)"></div>
<div class="t" style="left:2068px;width:40px;text-align:center;top:515.06px;font-size:24.5px;color:#555">8</div>
<div class="a" style="left:2108px;top:502px;width:40px;height:50px;background:#FFE8E8"></div>
<div class="a" style="left:2108px;top:502px;width:1px;height:50px;background:rgba(120,80,130,0.10)"></div>
<div class="t" style="left:2108px;width:40px;text-align:center;top:515.06px;font-size:24.5px;color:#555">8</div>
<div class="a" style="left:2228px;top:502px;width:40px;height:50px;background:#FFE8E8"></div>
<div class="a" style="left:2228px;top:502px;width:1px;height:50px;background:rgba(120,80,130,0.10)"></div>
<div class="t" style="left:2228px;width:40px;text-align:center;top:515.06px;font-size:24.5px;color:#555">2</div>
<div class="a" style="left:2268px;top:502px;width:40px;height:50px;background:#FFE8E8"></div>
<div class="a" style="left:2268px;top:502px;width:1px;height:50px;background:rgba(120,80,130,0.10)"></div>
<div class="t" style="left:2268px;width:40px;text-align:center;top:515.06px;font-size:24.5px;color:#555">4</div>
<div class="a" style="left:2348px;top:502px;width:40px;height:50px;background:#FFE8E8"></div>
<div class="a" style="left:2348px;top:502px;width:1px;height:50px;background:rgba(120,80,130,0.10)"></div>
<div class="t" style="left:2348px;width:40px;text-align:center;top:515.06px;font-size:24.5px;color:#555">4</div>
<div class="a" style="left:2388px;top:502px;width:40px;height:50px;background:#FFE8E8"></div>
<div class="a" style="left:2388px;top:502px;width:1px;height:50px;background:rgba(120,80,130,0.10)"></div>
<div class="t" style="left:2388px;width:40px;text-align:center;top:515.06px;font-size:24.5px;color:#555">4</div>
<div class="a" style="left:28px;top:552px;width:40px;height:50px;background:#EDD8F2"></div>
<div class="a" style="left:28px;top:552px;width:1px;height:50px;background:rgba(120,80,130,0.10)"></div>
<div class="t" style="left:28px;width:40px;text-align:center;top:565.06px;font-size:24.5px;color:#555">8</div>
<div class="a" style="left:68px;top:552px;width:40px;height:50px;background:#EDD8F2"></div>
<div class="a" style="left:68px;top:552px;width:1px;height:50px;background:rgba(120,80,130,0.10)"></div>
<div class="t" style="left:68px;width:40px;text-align:center;top:565.06px;font-size:24.5px;color:#555">8</div>
<div class="a" style="left:108px;top:552px;width:40px;height:50px;background:#EDD8F2"></div>
<div class="a" style="left:108px;top:552px;width:1px;height:50px;background:rgba(120,80,130,0.10)"></div>
<div class="t" style="left:108px;width:40px;text-align:center;top:565.06px;font-size:24.5px;color:#555">8</div>
<div class="a" style="left:148px;top:552px;width:40px;height:50px;background:#EDD8F2"></div>
<div class="a" style="left:148px;top:552px;width:1px;height:50px;background:rgba(120,80,130,0.10)"></div>
<div class="t" style="left:148px;width:40px;text-align:center;top:565.06px;font-size:24.5px;color:#555">8</div>
<div class="a" style="left:268px;top:552px;width:40px;height:50px;background:#EDD8F2"></div>
<div class="a" style="left:268px;top:552px;width:1px;height:50px;background:rgba(120,80,130,0.10)"></div>
<div class="t" style="left:268px;width:40px;text-align:center;top:565.06px;font-size:24.5px;color:#555">8</div>
<div class="a" style="left:308px;top:552px;width:40px;height:50px;background:#EDD8F2"></div>
<div class="a" style="left:308px;top:552px;width:1px;height:50px;background:rgba(120,80,130,0.10)"></div>
<div class="t" style="left:308px;width:40px;text-align:center;top:565.06px;font-size:24.5px;color:#555">8</div>
<div class="a" style="left:348px;top:552px;width:40px;height:50px;background:#EDD8F2"></div>
<div class="a" style="left:348px;top:552px;width:1px;height:50px;background:rgba(120,80,130,0.10)"></div>
<div class="t" style="left:348px;width:40px;text-align:center;top:565.06px;font-size:24.5px;color:#555">8</div>
<div class="a" style="left:388px;top:552px;width:40px;height:50px;background:#EDD8F2"></div>
<div class="a" style="left:388px;top:552px;width:1px;height:50px;background:rgba(120,80,130,0.10)"></div>
<div class="t" style="left:388px;width:40px;text-align:center;top:565.06px;font-size:24.5px;color:#555">8</div>
<div class="a" style="left:428px;top:552px;width:40px;height:50px;background:#EDD8F2"></div>
<div class="a" style="left:428px;top:552px;width:1px;height:50px;background:rgba(120,80,130,0.10)"></div>
<div class="t" style="left:428px;width:40px;text-align:center;top:565.06px;font-size:24.5px;color:#555">8</div>
<div class="a" style="left:548px;top:552px;width:40px;height:50px;background:#D6CBEE"></div>
<div class="a" style="left:548px;top:552px;width:1px;height:50px;background:rgba(120,80,130,0.10)"></div>
<div class="t" style="left:548px;width:40px;text-align:center;top:565.06px;font-size:24.5px;color:#555">8</div>
<div class="a" style="left:588px;top:552px;width:40px;height:50px;background:#EDD8F2"></div>
<div class="a" style="left:588px;top:552px;width:1px;height:50px;background:rgba(120,80,130,0.10)"></div>
<div class="t" style="left:588px;width:40px;text-align:center;top:565.06px;font-size:24.5px;color:#555">8</div>
<div class="a" style="left:628px;top:552px;width:40px;height:50px;background:#EDD8F2"></div>
<div class="a" style="left:628px;top:552px;width:1px;height:50px;background:rgba(120,80,130,0.10)"></div>
<div class="t" style="left:628px;width:40px;text-align:center;top:565.06px;font-size:24.5px;color:#555">8</div>
<div class="a" style="left:668px;top:552px;width:40px;height:50px;background:#EDD8F2"></div>
<div class="a" style="left:668px;top:552px;width:1px;height:50px;background:rgba(120,80,130,0.10)"></div>
<div class="t" style="left:668px;width:40px;text-align:center;top:565.06px;font-size:24.5px;color:#555">8</div>
<div class="a" style="left:708px;top:552px;width:40px;height:50px;background:#EDD8F2"></div>
<div class="a" style="left:708px;top:552px;width:1px;height:50px;background:rgba(120,80,130,0.10)"></div>
<div class="t" style="left:708px;width:40px;text-align:center;top:565.06px;font-size:24.5px;color:#555">8</div>
<div class="a" style="left:828px;top:552px;width:10px;height:50px;background:#EDD8F2"></div>
<div class="a" style="left:838px;top:552px;width:30px;height:50px;background:#E2D8E4"></div>
<div class="a" style="left:828px;top:552px;width:1px;height:50px;background:rgba(120,80,130,0.10)"></div>
<div class="t" style="left:828px;width:40px;text-align:center;top:565.06px;font-size:24.5px;color:#555">8</div>
<div class="a" style="left:868px;top:552px;width:40px;height:50px;background:#E2D8E4"></div>
<div class="a" style="left:868px;top:552px;width:1px;height:50px;background:rgba(120,80,130,0.10)"></div>
<div class="t" style="left:868px;width:40px;text-align:center;top:565.06px;font-size:24.5px;color:#555">8</div>
<div class="a" style="left:908px;top:552px;width:40px;height:50px;background:#E2D8E4"></div>
<div class="a" style="left:908px;top:552px;width:1px;height:50px;background:rgba(120,80,130,0.10)"></div>
<div class="t" style="left:908px;width:40px;text-align:center;top:565.06px;font-size:24.5px;color:#555">8</div>
<div class="a" style="left:948px;top:552px;width:40px;height:50px;background:#E2D8E4"></div>
<div class="a" style="left:948px;top:552px;width:1px;height:50px;background:rgba(120,80,130,0.10)"></div>
<div class="t" style="left:948px;width:40px;text-align:center;top:565.06px;font-size:24.5px;color:#555">8</div>
<div class="a" style="left:988px;top:552px;width:40px;height:50px;background:#E2D8E4"></div>
<div class="a" style="left:988px;top:552px;width:1px;height:50px;background:rgba(120,80,130,0.10)"></div>
<div class="t" style="left:988px;width:40px;text-align:center;top:565.06px;font-size:24.5px;color:#555">8</div>
<div class="a" style="left:1108px;top:552px;width:40px;height:50px;background:#E2D8E4"></div>
<div class="a" style="left:1108px;top:552px;width:1px;height:50px;background:rgba(120,80,130,0.10)"></div>
<div class="t" style="left:1108px;width:40px;text-align:center;top:565.06px;font-size:24.5px;color:#555">8</div>
<div class="a" style="left:1148px;top:552px;width:40px;height:50px;background:#E2D8E4"></div>
<div class="a" style="left:1148px;top:552px;width:1px;height:50px;background:rgba(120,80,130,0.10)"></div>
<div class="t" style="left:1148px;width:40px;text-align:center;top:565.06px;font-size:24.5px;color:#555">8</div>
<div class="a" style="left:1188px;top:552px;width:40px;height:50px;background:#E2D8E4"></div>
<div class="a" style="left:1188px;top:552px;width:1px;height:50px;background:rgba(120,80,130,0.10)"></div>
<div class="t" style="left:1188px;width:40px;text-align:center;top:565.06px;font-size:24.5px;color:#555">8</div>
<div class="a" style="left:1228px;top:552px;width:40px;height:50px;background:#E2D8E4"></div>
<div class="a" style="left:1228px;top:552px;width:1px;height:50px;background:rgba(120,80,130,0.10)"></div>
<div class="t" style="left:1228px;width:40px;text-align:center;top:565.06px;font-size:24.5px;color:#555">8</div>
<div class="a" style="left:1268px;top:552px;width:40px;height:50px;background:#E2D8E4"></div>
<div class="a" style="left:1268px;top:552px;width:1px;height:50px;background:rgba(120,80,130,0.10)"></div>
<div class="t" style="left:1268px;width:40px;text-align:center;top:565.06px;font-size:24.5px;color:#555">8</div>
<div class="a" style="left:1388px;top:552px;width:40px;height:50px;background:#E2D8E4"></div>
<div class="a" style="left:1388px;top:552px;width:1px;height:50px;background:rgba(120,80,130,0.10)"></div>
<div class="t" style="left:1388px;width:40px;text-align:center;top:565.06px;font-size:24.5px;color:#555">8</div>
<div class="a" style="left:1428px;top:552px;width:40px;height:50px;background:#E2D8E4"></div>
<div class="a" style="left:1428px;top:552px;width:1px;height:50px;background:rgba(120,80,130,0.10)"></div>
<div class="t" style="left:1428px;width:40px;text-align:center;top:565.06px;font-size:24.5px;color:#555">8</div>
<div class="a" style="left:1468px;top:552px;width:40px;height:50px;background:#FFE8E8"></div>
<div class="a" style="left:1468px;top:552px;width:1px;height:50px;background:rgba(120,80,130,0.10)"></div>
<div class="t" style="left:1468px;width:40px;text-align:center;top:565.06px;font-size:24.5px;color:#555">6</div>
<div class="a" style="left:1508px;top:552px;width:40px;height:50px;background:#FFE8E8"></div>
<div class="a" style="left:1508px;top:552px;width:1px;height:50px;background:rgba(120,80,130,0.10)"></div>
<div class="t" style="left:1508px;width:40px;text-align:center;top:565.06px;font-size:24.5px;color:#555">6</div>
<div class="a" style="left:1548px;top:552px;width:40px;height:50px;background:#FFE8E8"></div>
<div class="a" style="left:1548px;top:552px;width:1px;height:50px;background:rgba(120,80,130,0.10)"></div>
<div class="t" style="left:1548px;width:40px;text-align:center;top:565.06px;font-size:24.5px;color:#555">6</div>
<div class="a" style="left:1668px;top:552px;width:40px;height:50px;background:#FFE8E8"></div>
<div class="a" style="left:1668px;top:552px;width:1px;height:50px;background:rgba(120,80,130,0.10)"></div>
<div class="t" style="left:1668px;width:40px;text-align:center;top:565.06px;font-size:24.5px;color:#555">6</div>
<div class="a" style="left:1708px;top:552px;width:40px;height:50px;background:#FFE8E8"></div>
<div class="a" style="left:1708px;top:552px;width:1px;height:50px;background:rgba(120,80,130,0.10)"></div>
<div class="t" style="left:1708px;width:40px;text-align:center;top:565.06px;font-size:24.5px;color:#555">6</div>
<div class="a" style="left:1748px;top:552px;width:40px;height:50px;background:#FFE8E8"></div>
<div class="a" style="left:1748px;top:552px;width:1px;height:50px;background:rgba(120,80,130,0.10)"></div>
<div class="t" style="left:1748px;width:40px;text-align:center;top:565.06px;font-size:24.5px;color:#555">6</div>
<div class="a" style="left:1788px;top:552px;width:40px;height:50px;background:#EDD8F2"></div>
<div class="a" style="left:1788px;top:552px;width:1px;height:50px;background:rgba(120,80,130,0.10)"></div>
<div class="t" style="left:1788px;width:40px;text-align:center;top:565.06px;font-size:24.5px;color:#555">8</div>
<div class="a" style="left:1828px;top:552px;width:40px;height:50px;background:#EDD8F2"></div>
<div class="a" style="left:1828px;top:552px;width:1px;height:50px;background:rgba(120,80,130,0.10)"></div>
<div class="t" style="left:1828px;width:40px;text-align:center;top:565.06px;font-size:24.5px;color:#555">8</div>
<div class="a" style="left:1948px;top:552px;width:40px;height:50px;background:#EDD8F2"></div>
<div class="a" style="left:1948px;top:552px;width:1px;height:50px;background:rgba(120,80,130,0.10)"></div>
<div class="t" style="left:1948px;width:40px;text-align:center;top:565.06px;font-size:24.5px;color:#555">8</div>
<div class="a" style="left:1988px;top:552px;width:40px;height:50px;background:#EDD8F2"></div>
<div class="a" style="left:1988px;top:552px;width:1px;height:50px;background:rgba(120,80,130,0.10)"></div>
<div class="t" style="left:1988px;width:40px;text-align:center;top:565.06px;font-size:24.5px;color:#555">8</div>
<div class="a" style="left:2028px;top:552px;width:40px;height:50px;background:#EDD8F2"></div>
<div class="a" style="left:2028px;top:552px;width:1px;height:50px;background:rgba(120,80,130,0.10)"></div>
<div class="t" style="left:2028px;width:40px;text-align:center;top:565.06px;font-size:24.5px;color:#555">8</div>
<div class="a" style="left:2068px;top:552px;width:40px;height:50px;background:#EDD8F2"></div>
<div class="a" style="left:2068px;top:552px;width:1px;height:50px;background:rgba(120,80,130,0.10)"></div>
<div class="t" style="left:2068px;width:40px;text-align:center;top:565.06px;font-size:24.5px;color:#555">8</div>
<div class="a" style="left:2108px;top:552px;width:40px;height:50px;background:#EDD8F2"></div>
<div class="a" style="left:2108px;top:552px;width:1px;height:50px;background:rgba(120,80,130,0.10)"></div>
<div class="t" style="left:2108px;width:40px;text-align:center;top:565.06px;font-size:24.5px;color:#555">8</div>
<div class="a" style="left:2228px;top:552px;width:40px;height:50px;background:#EDD8F2"></div>
<div class="a" style="left:2228px;top:552px;width:1px;height:50px;background:rgba(120,80,130,0.10)"></div>
<div class="t" style="left:2228px;width:40px;text-align:center;top:565.06px;font-size:24.5px;color:#555">8</div>
<div class="a" style="left:2268px;top:552px;width:40px;height:50px;background:#EDD8F2"></div>
<div class="a" style="left:2268px;top:552px;width:1px;height:50px;background:rgba(120,80,130,0.10)"></div>
<div class="t" style="left:2268px;width:40px;text-align:center;top:565.06px;font-size:24.5px;color:#555">8</div>
<div class="a" style="left:2308px;top:552px;width:40px;height:50px;background:#EDD8F2"></div>
<div class="a" style="left:2308px;top:552px;width:1px;height:50px;background:rgba(120,80,130,0.10)"></div>
<div class="t" style="left:2308px;width:40px;text-align:center;top:565.06px;font-size:24.5px;color:#555">8</div>
<div class="a" style="left:2348px;top:552px;width:40px;height:50px;background:#EDD8F2"></div>
<div class="a" style="left:2348px;top:552px;width:1px;height:50px;background:rgba(120,80,130,0.10)"></div>
<div class="t" style="left:2348px;width:40px;text-align:center;top:565.06px;font-size:24.5px;color:#555">8</div>
<div class="a" style="left:2388px;top:552px;width:40px;height:50px;background:#EDD8F2"></div>
<div class="a" style="left:2388px;top:552px;width:1px;height:50px;background:rgba(120,80,130,0.10)"></div>
<div class="t" style="left:2388px;width:40px;text-align:center;top:565.06px;font-size:24.5px;color:#555">8</div>
<div class="a" style="left:1148px;top:101px;width:2px;height:554px;background:rgba(0,0,0,0.12)"></div>
<div class="a" style="left:2388px;top:101px;width:2px;height:554px;background:rgba(0,0,0,0.12)"></div>
<div class="a" style="left:0px;top:0px;width:8px;height:655px;background:linear-gradient(to right, rgba(0,0,0,0.10), rgba(0,0,0,0))"></div>
</div>
<div class="a" style="left:3510px;top:1297px;width:16px;height:655px;background:#fff"></div></body></html>
